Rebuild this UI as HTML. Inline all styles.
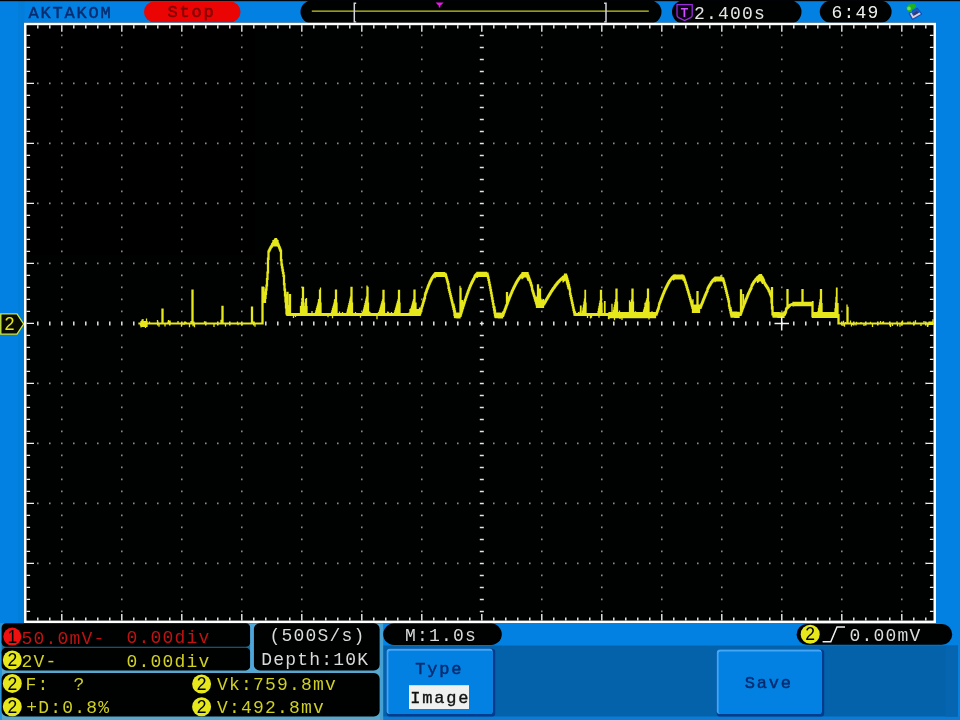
<!DOCTYPE html>
<html><head><meta charset="utf-8"><title>AKTAKOM oscilloscope</title>
<style>html,body{margin:0;padding:0;background:#0381e2;overflow:hidden}body{width:960px;height:720px;position:relative}text{white-space:pre}</style>
</head><body>
<svg width="960" height="720" viewBox="0 0 960 720" style="position:absolute;left:0;top:0;display:block;will-change:transform;opacity:0.999">
<rect width="960" height="720" fill="#0381e2"/>
<rect x="18" y="1" width="6.5" height="623" fill="#027dda"/>
<rect width="960" height="1.2" fill="#05050a"/>
<rect x="383" y="716" width="577" height="4" fill="#0a7cd8"/>
<rect x="383" y="645.5" width="575" height="71" fill="#0562aa"/>
<rect x="945.5" y="645.5" width="12.5" height="71" fill="#0665b0"/>
<rect x="144" y="1.5" width="96.5" height="20.8" rx="10.4" fill="#ec0404"/>
<rect x="300.5" y="0.5" width="361" height="23" rx="11.5" fill="#000"/>
<path d="M311.8 11.1H648.8" stroke="#c8ce24" stroke-width="1.4"/>
<path d="M356.2 3.2h-1.9v18.8h1.9M604.1 3.2h1.9v18.8h-1.9" stroke="#d4d4dc" stroke-width="1.5" fill="none"/>
<path d="M435.6 2.6h8l-2.6 2.6h-0.6v2.2h-1.6v-2.2h-0.6z" fill="#e818e8"/>
<rect x="672" y="0.5" width="129.5" height="23" rx="11.5" fill="#000"/>
 <path d="M677 4.6h15.2v10.6q0 1.6 -1.6 2.4l-6 3l-6-3q-1.6-0.8-1.6-2.4z" fill="#0c0014" stroke="#9c2cdc" stroke-width="1.3"/>
<rect x="819.8" y="0.8" width="71.8" height="22" rx="11" fill="#000"/>
<g><path d="M909 13.2L917.3 8L921.9 14.1L912.4 19.7z" fill="#1c58c0" stroke="#1450b4" stroke-width="1"/><path d="M910 13.6L912.8 18.4L920.8 13.9L919.5 12.4L913.4 16L911.4 12.8z" fill="#e2ccd8"/><path d="M913 13.4L917 11L918.4 12.8L914.2 15.2z" fill="#343a6c"/><path d="M906.3 7.2L909 4.3L914.5 4L916.4 6L914.2 8.6L912.2 9.2L911.6 12.4L909 12L907 10z" fill="#22b416"/><circle cx="909" cy="8.4" r="1.9" fill="#6ce05c"/></g>
<path d="M0.8 313.8H17L23.6 324L17 334.2H0.8z" fill="#0a0a00" stroke="#d8e830" stroke-width="1.3"/>
<rect x="24.0" y="22.7" width="912.0" height="600.4" fill="#000"/>
<path d="M61.0 35.4h1.6M61.0 47.4h1.6M61.0 59.4h1.6M61.0 71.4h1.6M61.0 83.4h1.6M61.0 95.4h1.6M61.0 107.4h1.6M61.0 119.4h1.6M61.0 131.4h1.6M61.0 143.4h1.6M61.0 155.4h1.6M61.0 167.4h1.6M61.0 179.4h1.6M61.0 191.4h1.6M61.0 203.4h1.6M61.0 215.4h1.6M61.0 227.4h1.6M61.0 239.4h1.6M61.0 251.4h1.6M61.0 263.4h1.6M61.0 275.4h1.6M61.0 287.4h1.6M61.0 299.4h1.6M61.0 311.4h1.6M61.0 335.4h1.6M61.0 347.4h1.6M61.0 359.4h1.6M61.0 371.4h1.6M61.0 383.4h1.6M61.0 395.4h1.6M61.0 407.4h1.6M61.0 419.4h1.6M61.0 431.4h1.6M61.0 443.4h1.6M61.0 455.4h1.6M61.0 467.4h1.6M61.0 479.4h1.6M61.0 491.4h1.6M61.0 503.4h1.6M61.0 515.4h1.6M61.0 527.4h1.6M61.0 539.4h1.6M61.0 551.4h1.6M61.0 563.4h1.6M61.0 575.4h1.6M61.0 587.4h1.6M61.0 599.4h1.6M61.0 611.4h1.6M121.0 35.4h1.6M121.0 47.4h1.6M121.0 59.4h1.6M121.0 71.4h1.6M121.0 83.4h1.6M121.0 95.4h1.6M121.0 107.4h1.6M121.0 119.4h1.6M121.0 131.4h1.6M121.0 143.4h1.6M121.0 155.4h1.6M121.0 167.4h1.6M121.0 179.4h1.6M121.0 191.4h1.6M121.0 203.4h1.6M121.0 215.4h1.6M121.0 227.4h1.6M121.0 239.4h1.6M121.0 251.4h1.6M121.0 263.4h1.6M121.0 275.4h1.6M121.0 287.4h1.6M121.0 299.4h1.6M121.0 311.4h1.6M121.0 335.4h1.6M121.0 347.4h1.6M121.0 359.4h1.6M121.0 371.4h1.6M121.0 383.4h1.6M121.0 395.4h1.6M121.0 407.4h1.6M121.0 419.4h1.6M121.0 431.4h1.6M121.0 443.4h1.6M121.0 455.4h1.6M121.0 467.4h1.6M121.0 479.4h1.6M121.0 491.4h1.6M121.0 503.4h1.6M121.0 515.4h1.6M121.0 527.4h1.6M121.0 539.4h1.6M121.0 551.4h1.6M121.0 563.4h1.6M121.0 575.4h1.6M121.0 587.4h1.6M121.0 599.4h1.6M121.0 611.4h1.6M181.0 35.4h1.6M181.0 47.4h1.6M181.0 59.4h1.6M181.0 71.4h1.6M181.0 83.4h1.6M181.0 95.4h1.6M181.0 107.4h1.6M181.0 119.4h1.6M181.0 131.4h1.6M181.0 143.4h1.6M181.0 155.4h1.6M181.0 167.4h1.6M181.0 179.4h1.6M181.0 191.4h1.6M181.0 203.4h1.6M181.0 215.4h1.6M181.0 227.4h1.6M181.0 239.4h1.6M181.0 251.4h1.6M181.0 263.4h1.6M181.0 275.4h1.6M181.0 287.4h1.6M181.0 299.4h1.6M181.0 311.4h1.6M181.0 335.4h1.6M181.0 347.4h1.6M181.0 359.4h1.6M181.0 371.4h1.6M181.0 383.4h1.6M181.0 395.4h1.6M181.0 407.4h1.6M181.0 419.4h1.6M181.0 431.4h1.6M181.0 443.4h1.6M181.0 455.4h1.6M181.0 467.4h1.6M181.0 479.4h1.6M181.0 491.4h1.6M181.0 503.4h1.6M181.0 515.4h1.6M181.0 527.4h1.6M181.0 539.4h1.6M181.0 551.4h1.6M181.0 563.4h1.6M181.0 575.4h1.6M181.0 587.4h1.6M181.0 599.4h1.6M181.0 611.4h1.6M241.0 35.4h1.6M241.0 47.4h1.6M241.0 59.4h1.6M241.0 71.4h1.6M241.0 83.4h1.6M241.0 95.4h1.6M241.0 107.4h1.6M241.0 119.4h1.6M241.0 131.4h1.6M241.0 143.4h1.6M241.0 155.4h1.6M241.0 167.4h1.6M241.0 179.4h1.6M241.0 191.4h1.6M241.0 203.4h1.6M241.0 215.4h1.6M241.0 227.4h1.6M241.0 239.4h1.6M241.0 251.4h1.6M241.0 263.4h1.6M241.0 275.4h1.6M241.0 287.4h1.6M241.0 299.4h1.6M241.0 311.4h1.6M241.0 335.4h1.6M241.0 347.4h1.6M241.0 359.4h1.6M241.0 371.4h1.6M241.0 383.4h1.6M241.0 395.4h1.6M241.0 407.4h1.6M241.0 419.4h1.6M241.0 431.4h1.6M241.0 443.4h1.6M241.0 455.4h1.6M241.0 467.4h1.6M241.0 479.4h1.6M241.0 491.4h1.6M241.0 503.4h1.6M241.0 515.4h1.6M241.0 527.4h1.6M241.0 539.4h1.6M241.0 551.4h1.6M241.0 563.4h1.6M241.0 575.4h1.6M241.0 587.4h1.6M241.0 599.4h1.6M241.0 611.4h1.6M301.0 35.4h1.6M301.0 47.4h1.6M301.0 59.4h1.6M301.0 71.4h1.6M301.0 83.4h1.6M301.0 95.4h1.6M301.0 107.4h1.6M301.0 119.4h1.6M301.0 131.4h1.6M301.0 143.4h1.6M301.0 155.4h1.6M301.0 167.4h1.6M301.0 179.4h1.6M301.0 191.4h1.6M301.0 203.4h1.6M301.0 215.4h1.6M301.0 227.4h1.6M301.0 239.4h1.6M301.0 251.4h1.6M301.0 263.4h1.6M301.0 275.4h1.6M301.0 287.4h1.6M301.0 299.4h1.6M301.0 311.4h1.6M301.0 335.4h1.6M301.0 347.4h1.6M301.0 359.4h1.6M301.0 371.4h1.6M301.0 383.4h1.6M301.0 395.4h1.6M301.0 407.4h1.6M301.0 419.4h1.6M301.0 431.4h1.6M301.0 443.4h1.6M301.0 455.4h1.6M301.0 467.4h1.6M301.0 479.4h1.6M301.0 491.4h1.6M301.0 503.4h1.6M301.0 515.4h1.6M301.0 527.4h1.6M301.0 539.4h1.6M301.0 551.4h1.6M301.0 563.4h1.6M301.0 575.4h1.6M301.0 587.4h1.6M301.0 599.4h1.6M301.0 611.4h1.6M361.0 35.4h1.6M361.0 47.4h1.6M361.0 59.4h1.6M361.0 71.4h1.6M361.0 83.4h1.6M361.0 95.4h1.6M361.0 107.4h1.6M361.0 119.4h1.6M361.0 131.4h1.6M361.0 143.4h1.6M361.0 155.4h1.6M361.0 167.4h1.6M361.0 179.4h1.6M361.0 191.4h1.6M361.0 203.4h1.6M361.0 215.4h1.6M361.0 227.4h1.6M361.0 239.4h1.6M361.0 251.4h1.6M361.0 263.4h1.6M361.0 275.4h1.6M361.0 287.4h1.6M361.0 299.4h1.6M361.0 311.4h1.6M361.0 335.4h1.6M361.0 347.4h1.6M361.0 359.4h1.6M361.0 371.4h1.6M361.0 383.4h1.6M361.0 395.4h1.6M361.0 407.4h1.6M361.0 419.4h1.6M361.0 431.4h1.6M361.0 443.4h1.6M361.0 455.4h1.6M361.0 467.4h1.6M361.0 479.4h1.6M361.0 491.4h1.6M361.0 503.4h1.6M361.0 515.4h1.6M361.0 527.4h1.6M361.0 539.4h1.6M361.0 551.4h1.6M361.0 563.4h1.6M361.0 575.4h1.6M361.0 587.4h1.6M361.0 599.4h1.6M361.0 611.4h1.6M421.0 35.4h1.6M421.0 47.4h1.6M421.0 59.4h1.6M421.0 71.4h1.6M421.0 83.4h1.6M421.0 95.4h1.6M421.0 107.4h1.6M421.0 119.4h1.6M421.0 131.4h1.6M421.0 143.4h1.6M421.0 155.4h1.6M421.0 167.4h1.6M421.0 179.4h1.6M421.0 191.4h1.6M421.0 203.4h1.6M421.0 215.4h1.6M421.0 227.4h1.6M421.0 239.4h1.6M421.0 251.4h1.6M421.0 263.4h1.6M421.0 275.4h1.6M421.0 287.4h1.6M421.0 299.4h1.6M421.0 311.4h1.6M421.0 335.4h1.6M421.0 347.4h1.6M421.0 359.4h1.6M421.0 371.4h1.6M421.0 383.4h1.6M421.0 395.4h1.6M421.0 407.4h1.6M421.0 419.4h1.6M421.0 431.4h1.6M421.0 443.4h1.6M421.0 455.4h1.6M421.0 467.4h1.6M421.0 479.4h1.6M421.0 491.4h1.6M421.0 503.4h1.6M421.0 515.4h1.6M421.0 527.4h1.6M421.0 539.4h1.6M421.0 551.4h1.6M421.0 563.4h1.6M421.0 575.4h1.6M421.0 587.4h1.6M421.0 599.4h1.6M421.0 611.4h1.6M541.0 35.4h1.6M541.0 47.4h1.6M541.0 59.4h1.6M541.0 71.4h1.6M541.0 83.4h1.6M541.0 95.4h1.6M541.0 107.4h1.6M541.0 119.4h1.6M541.0 131.4h1.6M541.0 143.4h1.6M541.0 155.4h1.6M541.0 167.4h1.6M541.0 179.4h1.6M541.0 191.4h1.6M541.0 203.4h1.6M541.0 215.4h1.6M541.0 227.4h1.6M541.0 239.4h1.6M541.0 251.4h1.6M541.0 263.4h1.6M541.0 275.4h1.6M541.0 287.4h1.6M541.0 299.4h1.6M541.0 311.4h1.6M541.0 335.4h1.6M541.0 347.4h1.6M541.0 359.4h1.6M541.0 371.4h1.6M541.0 383.4h1.6M541.0 395.4h1.6M541.0 407.4h1.6M541.0 419.4h1.6M541.0 431.4h1.6M541.0 443.4h1.6M541.0 455.4h1.6M541.0 467.4h1.6M541.0 479.4h1.6M541.0 491.4h1.6M541.0 503.4h1.6M541.0 515.4h1.6M541.0 527.4h1.6M541.0 539.4h1.6M541.0 551.4h1.6M541.0 563.4h1.6M541.0 575.4h1.6M541.0 587.4h1.6M541.0 599.4h1.6M541.0 611.4h1.6M601.0 35.4h1.6M601.0 47.4h1.6M601.0 59.4h1.6M601.0 71.4h1.6M601.0 83.4h1.6M601.0 95.4h1.6M601.0 107.4h1.6M601.0 119.4h1.6M601.0 131.4h1.6M601.0 143.4h1.6M601.0 155.4h1.6M601.0 167.4h1.6M601.0 179.4h1.6M601.0 191.4h1.6M601.0 203.4h1.6M601.0 215.4h1.6M601.0 227.4h1.6M601.0 239.4h1.6M601.0 251.4h1.6M601.0 263.4h1.6M601.0 275.4h1.6M601.0 287.4h1.6M601.0 299.4h1.6M601.0 311.4h1.6M601.0 335.4h1.6M601.0 347.4h1.6M601.0 359.4h1.6M601.0 371.4h1.6M601.0 383.4h1.6M601.0 395.4h1.6M601.0 407.4h1.6M601.0 419.4h1.6M601.0 431.4h1.6M601.0 443.4h1.6M601.0 455.4h1.6M601.0 467.4h1.6M601.0 479.4h1.6M601.0 491.4h1.6M601.0 503.4h1.6M601.0 515.4h1.6M601.0 527.4h1.6M601.0 539.4h1.6M601.0 551.4h1.6M601.0 563.4h1.6M601.0 575.4h1.6M601.0 587.4h1.6M601.0 599.4h1.6M601.0 611.4h1.6M661.0 35.4h1.6M661.0 47.4h1.6M661.0 59.4h1.6M661.0 71.4h1.6M661.0 83.4h1.6M661.0 95.4h1.6M661.0 107.4h1.6M661.0 119.4h1.6M661.0 131.4h1.6M661.0 143.4h1.6M661.0 155.4h1.6M661.0 167.4h1.6M661.0 179.4h1.6M661.0 191.4h1.6M661.0 203.4h1.6M661.0 215.4h1.6M661.0 227.4h1.6M661.0 239.4h1.6M661.0 251.4h1.6M661.0 263.4h1.6M661.0 275.4h1.6M661.0 287.4h1.6M661.0 299.4h1.6M661.0 311.4h1.6M661.0 335.4h1.6M661.0 347.4h1.6M661.0 359.4h1.6M661.0 371.4h1.6M661.0 383.4h1.6M661.0 395.4h1.6M661.0 407.4h1.6M661.0 419.4h1.6M661.0 431.4h1.6M661.0 443.4h1.6M661.0 455.4h1.6M661.0 467.4h1.6M661.0 479.4h1.6M661.0 491.4h1.6M661.0 503.4h1.6M661.0 515.4h1.6M661.0 527.4h1.6M661.0 539.4h1.6M661.0 551.4h1.6M661.0 563.4h1.6M661.0 575.4h1.6M661.0 587.4h1.6M661.0 599.4h1.6M661.0 611.4h1.6M721.0 35.4h1.6M721.0 47.4h1.6M721.0 59.4h1.6M721.0 71.4h1.6M721.0 83.4h1.6M721.0 95.4h1.6M721.0 107.4h1.6M721.0 119.4h1.6M721.0 131.4h1.6M721.0 143.4h1.6M721.0 155.4h1.6M721.0 167.4h1.6M721.0 179.4h1.6M721.0 191.4h1.6M721.0 203.4h1.6M721.0 215.4h1.6M721.0 227.4h1.6M721.0 239.4h1.6M721.0 251.4h1.6M721.0 263.4h1.6M721.0 275.4h1.6M721.0 287.4h1.6M721.0 299.4h1.6M721.0 311.4h1.6M721.0 335.4h1.6M721.0 347.4h1.6M721.0 359.4h1.6M721.0 371.4h1.6M721.0 383.4h1.6M721.0 395.4h1.6M721.0 407.4h1.6M721.0 419.4h1.6M721.0 431.4h1.6M721.0 443.4h1.6M721.0 455.4h1.6M721.0 467.4h1.6M721.0 479.4h1.6M721.0 491.4h1.6M721.0 503.4h1.6M721.0 515.4h1.6M721.0 527.4h1.6M721.0 539.4h1.6M721.0 551.4h1.6M721.0 563.4h1.6M721.0 575.4h1.6M721.0 587.4h1.6M721.0 599.4h1.6M721.0 611.4h1.6M781.0 35.4h1.6M781.0 47.4h1.6M781.0 59.4h1.6M781.0 71.4h1.6M781.0 83.4h1.6M781.0 95.4h1.6M781.0 107.4h1.6M781.0 119.4h1.6M781.0 131.4h1.6M781.0 143.4h1.6M781.0 155.4h1.6M781.0 167.4h1.6M781.0 179.4h1.6M781.0 191.4h1.6M781.0 203.4h1.6M781.0 215.4h1.6M781.0 227.4h1.6M781.0 239.4h1.6M781.0 251.4h1.6M781.0 263.4h1.6M781.0 275.4h1.6M781.0 287.4h1.6M781.0 299.4h1.6M781.0 311.4h1.6M781.0 335.4h1.6M781.0 347.4h1.6M781.0 359.4h1.6M781.0 371.4h1.6M781.0 383.4h1.6M781.0 395.4h1.6M781.0 407.4h1.6M781.0 419.4h1.6M781.0 431.4h1.6M781.0 443.4h1.6M781.0 455.4h1.6M781.0 467.4h1.6M781.0 479.4h1.6M781.0 491.4h1.6M781.0 503.4h1.6M781.0 515.4h1.6M781.0 527.4h1.6M781.0 539.4h1.6M781.0 551.4h1.6M781.0 563.4h1.6M781.0 575.4h1.6M781.0 587.4h1.6M781.0 599.4h1.6M781.0 611.4h1.6M841.0 35.4h1.6M841.0 47.4h1.6M841.0 59.4h1.6M841.0 71.4h1.6M841.0 83.4h1.6M841.0 95.4h1.6M841.0 107.4h1.6M841.0 119.4h1.6M841.0 131.4h1.6M841.0 143.4h1.6M841.0 155.4h1.6M841.0 167.4h1.6M841.0 179.4h1.6M841.0 191.4h1.6M841.0 203.4h1.6M841.0 215.4h1.6M841.0 227.4h1.6M841.0 239.4h1.6M841.0 251.4h1.6M841.0 263.4h1.6M841.0 275.4h1.6M841.0 287.4h1.6M841.0 299.4h1.6M841.0 311.4h1.6M841.0 335.4h1.6M841.0 347.4h1.6M841.0 359.4h1.6M841.0 371.4h1.6M841.0 383.4h1.6M841.0 395.4h1.6M841.0 407.4h1.6M841.0 419.4h1.6M841.0 431.4h1.6M841.0 443.4h1.6M841.0 455.4h1.6M841.0 467.4h1.6M841.0 479.4h1.6M841.0 491.4h1.6M841.0 503.4h1.6M841.0 515.4h1.6M841.0 527.4h1.6M841.0 539.4h1.6M841.0 551.4h1.6M841.0 563.4h1.6M841.0 575.4h1.6M841.0 587.4h1.6M841.0 599.4h1.6M841.0 611.4h1.6M901.0 35.4h1.6M901.0 47.4h1.6M901.0 59.4h1.6M901.0 71.4h1.6M901.0 83.4h1.6M901.0 95.4h1.6M901.0 107.4h1.6M901.0 119.4h1.6M901.0 131.4h1.6M901.0 143.4h1.6M901.0 155.4h1.6M901.0 167.4h1.6M901.0 179.4h1.6M901.0 191.4h1.6M901.0 203.4h1.6M901.0 215.4h1.6M901.0 227.4h1.6M901.0 239.4h1.6M901.0 251.4h1.6M901.0 263.4h1.6M901.0 275.4h1.6M901.0 287.4h1.6M901.0 299.4h1.6M901.0 311.4h1.6M901.0 335.4h1.6M901.0 347.4h1.6M901.0 359.4h1.6M901.0 371.4h1.6M901.0 383.4h1.6M901.0 395.4h1.6M901.0 407.4h1.6M901.0 419.4h1.6M901.0 431.4h1.6M901.0 443.4h1.6M901.0 455.4h1.6M901.0 467.4h1.6M901.0 479.4h1.6M901.0 491.4h1.6M901.0 503.4h1.6M901.0 515.4h1.6M901.0 527.4h1.6M901.0 539.4h1.6M901.0 551.4h1.6M901.0 563.4h1.6M901.0 575.4h1.6M901.0 587.4h1.6M901.0 599.4h1.6M901.0 611.4h1.6M37.0 83.4h1.6M49.0 83.4h1.6M73.0 83.4h1.6M85.0 83.4h1.6M97.0 83.4h1.6M109.0 83.4h1.6M133.0 83.4h1.6M145.0 83.4h1.6M157.0 83.4h1.6M169.0 83.4h1.6M193.0 83.4h1.6M205.0 83.4h1.6M217.0 83.4h1.6M229.0 83.4h1.6M253.0 83.4h1.6M265.0 83.4h1.6M277.0 83.4h1.6M289.0 83.4h1.6M313.0 83.4h1.6M325.0 83.4h1.6M337.0 83.4h1.6M349.0 83.4h1.6M373.0 83.4h1.6M385.0 83.4h1.6M397.0 83.4h1.6M409.0 83.4h1.6M433.0 83.4h1.6M445.0 83.4h1.6M457.0 83.4h1.6M469.0 83.4h1.6M493.0 83.4h1.6M505.0 83.4h1.6M517.0 83.4h1.6M529.0 83.4h1.6M553.0 83.4h1.6M565.0 83.4h1.6M577.0 83.4h1.6M589.0 83.4h1.6M613.0 83.4h1.6M625.0 83.4h1.6M637.0 83.4h1.6M649.0 83.4h1.6M673.0 83.4h1.6M685.0 83.4h1.6M697.0 83.4h1.6M709.0 83.4h1.6M733.0 83.4h1.6M745.0 83.4h1.6M757.0 83.4h1.6M769.0 83.4h1.6M793.0 83.4h1.6M805.0 83.4h1.6M817.0 83.4h1.6M829.0 83.4h1.6M853.0 83.4h1.6M865.0 83.4h1.6M877.0 83.4h1.6M889.0 83.4h1.6M913.0 83.4h1.6M925.0 83.4h1.6M37.0 143.4h1.6M49.0 143.4h1.6M73.0 143.4h1.6M85.0 143.4h1.6M97.0 143.4h1.6M109.0 143.4h1.6M133.0 143.4h1.6M145.0 143.4h1.6M157.0 143.4h1.6M169.0 143.4h1.6M193.0 143.4h1.6M205.0 143.4h1.6M217.0 143.4h1.6M229.0 143.4h1.6M253.0 143.4h1.6M265.0 143.4h1.6M277.0 143.4h1.6M289.0 143.4h1.6M313.0 143.4h1.6M325.0 143.4h1.6M337.0 143.4h1.6M349.0 143.4h1.6M373.0 143.4h1.6M385.0 143.4h1.6M397.0 143.4h1.6M409.0 143.4h1.6M433.0 143.4h1.6M445.0 143.4h1.6M457.0 143.4h1.6M469.0 143.4h1.6M493.0 143.4h1.6M505.0 143.4h1.6M517.0 143.4h1.6M529.0 143.4h1.6M553.0 143.4h1.6M565.0 143.4h1.6M577.0 143.4h1.6M589.0 143.4h1.6M613.0 143.4h1.6M625.0 143.4h1.6M637.0 143.4h1.6M649.0 143.4h1.6M673.0 143.4h1.6M685.0 143.4h1.6M697.0 143.4h1.6M709.0 143.4h1.6M733.0 143.4h1.6M745.0 143.4h1.6M757.0 143.4h1.6M769.0 143.4h1.6M793.0 143.4h1.6M805.0 143.4h1.6M817.0 143.4h1.6M829.0 143.4h1.6M853.0 143.4h1.6M865.0 143.4h1.6M877.0 143.4h1.6M889.0 143.4h1.6M913.0 143.4h1.6M925.0 143.4h1.6M37.0 203.4h1.6M49.0 203.4h1.6M73.0 203.4h1.6M85.0 203.4h1.6M97.0 203.4h1.6M109.0 203.4h1.6M133.0 203.4h1.6M145.0 203.4h1.6M157.0 203.4h1.6M169.0 203.4h1.6M193.0 203.4h1.6M205.0 203.4h1.6M217.0 203.4h1.6M229.0 203.4h1.6M253.0 203.4h1.6M265.0 203.4h1.6M277.0 203.4h1.6M289.0 203.4h1.6M313.0 203.4h1.6M325.0 203.4h1.6M337.0 203.4h1.6M349.0 203.4h1.6M373.0 203.4h1.6M385.0 203.4h1.6M397.0 203.4h1.6M409.0 203.4h1.6M433.0 203.4h1.6M445.0 203.4h1.6M457.0 203.4h1.6M469.0 203.4h1.6M493.0 203.4h1.6M505.0 203.4h1.6M517.0 203.4h1.6M529.0 203.4h1.6M553.0 203.4h1.6M565.0 203.4h1.6M577.0 203.4h1.6M589.0 203.4h1.6M613.0 203.4h1.6M625.0 203.4h1.6M637.0 203.4h1.6M649.0 203.4h1.6M673.0 203.4h1.6M685.0 203.4h1.6M697.0 203.4h1.6M709.0 203.4h1.6M733.0 203.4h1.6M745.0 203.4h1.6M757.0 203.4h1.6M769.0 203.4h1.6M793.0 203.4h1.6M805.0 203.4h1.6M817.0 203.4h1.6M829.0 203.4h1.6M853.0 203.4h1.6M865.0 203.4h1.6M877.0 203.4h1.6M889.0 203.4h1.6M913.0 203.4h1.6M925.0 203.4h1.6M37.0 263.4h1.6M49.0 263.4h1.6M73.0 263.4h1.6M85.0 263.4h1.6M97.0 263.4h1.6M109.0 263.4h1.6M133.0 263.4h1.6M145.0 263.4h1.6M157.0 263.4h1.6M169.0 263.4h1.6M193.0 263.4h1.6M205.0 263.4h1.6M217.0 263.4h1.6M229.0 263.4h1.6M253.0 263.4h1.6M265.0 263.4h1.6M277.0 263.4h1.6M289.0 263.4h1.6M313.0 263.4h1.6M325.0 263.4h1.6M337.0 263.4h1.6M349.0 263.4h1.6M373.0 263.4h1.6M385.0 263.4h1.6M397.0 263.4h1.6M409.0 263.4h1.6M433.0 263.4h1.6M445.0 263.4h1.6M457.0 263.4h1.6M469.0 263.4h1.6M493.0 263.4h1.6M505.0 263.4h1.6M517.0 263.4h1.6M529.0 263.4h1.6M553.0 263.4h1.6M565.0 263.4h1.6M577.0 263.4h1.6M589.0 263.4h1.6M613.0 263.4h1.6M625.0 263.4h1.6M637.0 263.4h1.6M649.0 263.4h1.6M673.0 263.4h1.6M685.0 263.4h1.6M697.0 263.4h1.6M709.0 263.4h1.6M733.0 263.4h1.6M745.0 263.4h1.6M757.0 263.4h1.6M769.0 263.4h1.6M793.0 263.4h1.6M805.0 263.4h1.6M817.0 263.4h1.6M829.0 263.4h1.6M853.0 263.4h1.6M865.0 263.4h1.6M877.0 263.4h1.6M889.0 263.4h1.6M913.0 263.4h1.6M925.0 263.4h1.6M37.0 383.4h1.6M49.0 383.4h1.6M73.0 383.4h1.6M85.0 383.4h1.6M97.0 383.4h1.6M109.0 383.4h1.6M133.0 383.4h1.6M145.0 383.4h1.6M157.0 383.4h1.6M169.0 383.4h1.6M193.0 383.4h1.6M205.0 383.4h1.6M217.0 383.4h1.6M229.0 383.4h1.6M253.0 383.4h1.6M265.0 383.4h1.6M277.0 383.4h1.6M289.0 383.4h1.6M313.0 383.4h1.6M325.0 383.4h1.6M337.0 383.4h1.6M349.0 383.4h1.6M373.0 383.4h1.6M385.0 383.4h1.6M397.0 383.4h1.6M409.0 383.4h1.6M433.0 383.4h1.6M445.0 383.4h1.6M457.0 383.4h1.6M469.0 383.4h1.6M493.0 383.4h1.6M505.0 383.4h1.6M517.0 383.4h1.6M529.0 383.4h1.6M553.0 383.4h1.6M565.0 383.4h1.6M577.0 383.4h1.6M589.0 383.4h1.6M613.0 383.4h1.6M625.0 383.4h1.6M637.0 383.4h1.6M649.0 383.4h1.6M673.0 383.4h1.6M685.0 383.4h1.6M697.0 383.4h1.6M709.0 383.4h1.6M733.0 383.4h1.6M745.0 383.4h1.6M757.0 383.4h1.6M769.0 383.4h1.6M793.0 383.4h1.6M805.0 383.4h1.6M817.0 383.4h1.6M829.0 383.4h1.6M853.0 383.4h1.6M865.0 383.4h1.6M877.0 383.4h1.6M889.0 383.4h1.6M913.0 383.4h1.6M925.0 383.4h1.6M37.0 443.4h1.6M49.0 443.4h1.6M73.0 443.4h1.6M85.0 443.4h1.6M97.0 443.4h1.6M109.0 443.4h1.6M133.0 443.4h1.6M145.0 443.4h1.6M157.0 443.4h1.6M169.0 443.4h1.6M193.0 443.4h1.6M205.0 443.4h1.6M217.0 443.4h1.6M229.0 443.4h1.6M253.0 443.4h1.6M265.0 443.4h1.6M277.0 443.4h1.6M289.0 443.4h1.6M313.0 443.4h1.6M325.0 443.4h1.6M337.0 443.4h1.6M349.0 443.4h1.6M373.0 443.4h1.6M385.0 443.4h1.6M397.0 443.4h1.6M409.0 443.4h1.6M433.0 443.4h1.6M445.0 443.4h1.6M457.0 443.4h1.6M469.0 443.4h1.6M493.0 443.4h1.6M505.0 443.4h1.6M517.0 443.4h1.6M529.0 443.4h1.6M553.0 443.4h1.6M565.0 443.4h1.6M577.0 443.4h1.6M589.0 443.4h1.6M613.0 443.4h1.6M625.0 443.4h1.6M637.0 443.4h1.6M649.0 443.4h1.6M673.0 443.4h1.6M685.0 443.4h1.6M697.0 443.4h1.6M709.0 443.4h1.6M733.0 443.4h1.6M745.0 443.4h1.6M757.0 443.4h1.6M769.0 443.4h1.6M793.0 443.4h1.6M805.0 443.4h1.6M817.0 443.4h1.6M829.0 443.4h1.6M853.0 443.4h1.6M865.0 443.4h1.6M877.0 443.4h1.6M889.0 443.4h1.6M913.0 443.4h1.6M925.0 443.4h1.6M37.0 503.4h1.6M49.0 503.4h1.6M73.0 503.4h1.6M85.0 503.4h1.6M97.0 503.4h1.6M109.0 503.4h1.6M133.0 503.4h1.6M145.0 503.4h1.6M157.0 503.4h1.6M169.0 503.4h1.6M193.0 503.4h1.6M205.0 503.4h1.6M217.0 503.4h1.6M229.0 503.4h1.6M253.0 503.4h1.6M265.0 503.4h1.6M277.0 503.4h1.6M289.0 503.4h1.6M313.0 503.4h1.6M325.0 503.4h1.6M337.0 503.4h1.6M349.0 503.4h1.6M373.0 503.4h1.6M385.0 503.4h1.6M397.0 503.4h1.6M409.0 503.4h1.6M433.0 503.4h1.6M445.0 503.4h1.6M457.0 503.4h1.6M469.0 503.4h1.6M493.0 503.4h1.6M505.0 503.4h1.6M517.0 503.4h1.6M529.0 503.4h1.6M553.0 503.4h1.6M565.0 503.4h1.6M577.0 503.4h1.6M589.0 503.4h1.6M613.0 503.4h1.6M625.0 503.4h1.6M637.0 503.4h1.6M649.0 503.4h1.6M673.0 503.4h1.6M685.0 503.4h1.6M697.0 503.4h1.6M709.0 503.4h1.6M733.0 503.4h1.6M745.0 503.4h1.6M757.0 503.4h1.6M769.0 503.4h1.6M793.0 503.4h1.6M805.0 503.4h1.6M817.0 503.4h1.6M829.0 503.4h1.6M853.0 503.4h1.6M865.0 503.4h1.6M877.0 503.4h1.6M889.0 503.4h1.6M913.0 503.4h1.6M925.0 503.4h1.6M37.0 563.4h1.6M49.0 563.4h1.6M73.0 563.4h1.6M85.0 563.4h1.6M97.0 563.4h1.6M109.0 563.4h1.6M133.0 563.4h1.6M145.0 563.4h1.6M157.0 563.4h1.6M169.0 563.4h1.6M193.0 563.4h1.6M205.0 563.4h1.6M217.0 563.4h1.6M229.0 563.4h1.6M253.0 563.4h1.6M265.0 563.4h1.6M277.0 563.4h1.6M289.0 563.4h1.6M313.0 563.4h1.6M325.0 563.4h1.6M337.0 563.4h1.6M349.0 563.4h1.6M373.0 563.4h1.6M385.0 563.4h1.6M397.0 563.4h1.6M409.0 563.4h1.6M433.0 563.4h1.6M445.0 563.4h1.6M457.0 563.4h1.6M469.0 563.4h1.6M493.0 563.4h1.6M505.0 563.4h1.6M517.0 563.4h1.6M529.0 563.4h1.6M553.0 563.4h1.6M565.0 563.4h1.6M577.0 563.4h1.6M589.0 563.4h1.6M613.0 563.4h1.6M625.0 563.4h1.6M637.0 563.4h1.6M649.0 563.4h1.6M673.0 563.4h1.6M685.0 563.4h1.6M697.0 563.4h1.6M709.0 563.4h1.6M733.0 563.4h1.6M745.0 563.4h1.6M757.0 563.4h1.6M769.0 563.4h1.6M793.0 563.4h1.6M805.0 563.4h1.6M817.0 563.4h1.6M829.0 563.4h1.6M853.0 563.4h1.6M865.0 563.4h1.6M877.0 563.4h1.6M889.0 563.4h1.6M913.0 563.4h1.6M925.0 563.4h1.6" stroke="#8a8a8a" stroke-width="1.6" fill="none"/>
<path d="M479.8 35.4h4M479.8 47.4h4M479.8 59.4h4M479.8 71.4h4M479.8 83.4h4M479.8 95.4h4M479.8 107.4h4M479.8 119.4h4M479.8 131.4h4M479.8 143.4h4M479.8 155.4h4M479.8 167.4h4M479.8 179.4h4M479.8 191.4h4M479.8 203.4h4M479.8 215.4h4M479.8 227.4h4M479.8 239.4h4M479.8 251.4h4M479.8 263.4h4M479.8 275.4h4M479.8 287.4h4M479.8 299.4h4M479.8 311.4h4M479.8 323.4h4M479.8 335.4h4M479.8 347.4h4M479.8 359.4h4M479.8 371.4h4M479.8 383.4h4M479.8 395.4h4M479.8 407.4h4M479.8 419.4h4M479.8 431.4h4M479.8 443.4h4M479.8 455.4h4M479.8 467.4h4M479.8 479.4h4M479.8 491.4h4M479.8 503.4h4M479.8 515.4h4M479.8 527.4h4M479.8 539.4h4M479.8 551.4h4M479.8 563.4h4M479.8 575.4h4M479.8 587.4h4M479.8 599.4h4M479.8 611.4h4M37.8 321.4v4M49.8 321.4v4M61.8 321.4v4M73.8 321.4v4M85.8 321.4v4M97.8 321.4v4M109.8 321.4v4M121.8 321.4v4M133.8 321.4v4M145.8 321.4v4M157.8 321.4v4M169.8 321.4v4M181.8 321.4v4M193.8 321.4v4M205.8 321.4v4M217.8 321.4v4M229.8 321.4v4M241.8 321.4v4M253.8 321.4v4M265.8 321.4v4M277.8 321.4v4M289.8 321.4v4M301.8 321.4v4M313.8 321.4v4M325.8 321.4v4M337.8 321.4v4M349.8 321.4v4M361.8 321.4v4M373.8 321.4v4M385.8 321.4v4M397.8 321.4v4M409.8 321.4v4M421.8 321.4v4M433.8 321.4v4M445.8 321.4v4M457.8 321.4v4M469.8 321.4v4M481.8 321.4v4M493.8 321.4v4M505.8 321.4v4M517.8 321.4v4M529.8 321.4v4M541.8 321.4v4M553.8 321.4v4M565.8 321.4v4M577.8 321.4v4M589.8 321.4v4M601.8 321.4v4M613.8 321.4v4M625.8 321.4v4M637.8 321.4v4M649.8 321.4v4M661.8 321.4v4M673.8 321.4v4M685.8 321.4v4M697.8 321.4v4M709.8 321.4v4M721.8 321.4v4M733.8 321.4v4M745.8 321.4v4M757.8 321.4v4M769.8 321.4v4M781.8 321.4v4M793.8 321.4v4M805.8 321.4v4M817.8 321.4v4M829.8 321.4v4M841.8 321.4v4M853.8 321.4v4M865.8 321.4v4M877.8 321.4v4M889.8 321.4v4M901.8 321.4v4M913.8 321.4v4M925.8 321.4v4" stroke="#e4e4e4" stroke-width="1.5" fill="none"/>
<path d="M37.8 25.2v3.2M37.8 620.6v-3.2M49.8 25.2v3.2M49.8 620.6v-3.2M61.8 25.2v6.5M61.8 620.6v-6.5M73.8 25.2v3.2M73.8 620.6v-3.2M85.8 25.2v3.2M85.8 620.6v-3.2M97.8 25.2v3.2M97.8 620.6v-3.2M109.8 25.2v3.2M109.8 620.6v-3.2M121.8 25.2v6.5M121.8 620.6v-6.5M133.8 25.2v3.2M133.8 620.6v-3.2M145.8 25.2v3.2M145.8 620.6v-3.2M157.8 25.2v3.2M157.8 620.6v-3.2M169.8 25.2v3.2M169.8 620.6v-3.2M181.8 25.2v6.5M181.8 620.6v-6.5M193.8 25.2v3.2M193.8 620.6v-3.2M205.8 25.2v3.2M205.8 620.6v-3.2M217.8 25.2v3.2M217.8 620.6v-3.2M229.8 25.2v3.2M229.8 620.6v-3.2M241.8 25.2v6.5M241.8 620.6v-6.5M253.8 25.2v3.2M253.8 620.6v-3.2M265.8 25.2v3.2M265.8 620.6v-3.2M277.8 25.2v3.2M277.8 620.6v-3.2M289.8 25.2v3.2M289.8 620.6v-3.2M301.8 25.2v6.5M301.8 620.6v-6.5M313.8 25.2v3.2M313.8 620.6v-3.2M325.8 25.2v3.2M325.8 620.6v-3.2M337.8 25.2v3.2M337.8 620.6v-3.2M349.8 25.2v3.2M349.8 620.6v-3.2M361.8 25.2v6.5M361.8 620.6v-6.5M373.8 25.2v3.2M373.8 620.6v-3.2M385.8 25.2v3.2M385.8 620.6v-3.2M397.8 25.2v3.2M397.8 620.6v-3.2M409.8 25.2v3.2M409.8 620.6v-3.2M421.8 25.2v6.5M421.8 620.6v-6.5M433.8 25.2v3.2M433.8 620.6v-3.2M445.8 25.2v3.2M445.8 620.6v-3.2M457.8 25.2v3.2M457.8 620.6v-3.2M469.8 25.2v3.2M469.8 620.6v-3.2M481.8 25.2v6.5M481.8 620.6v-6.5M493.8 25.2v3.2M493.8 620.6v-3.2M505.8 25.2v3.2M505.8 620.6v-3.2M517.8 25.2v3.2M517.8 620.6v-3.2M529.8 25.2v3.2M529.8 620.6v-3.2M541.8 25.2v6.5M541.8 620.6v-6.5M553.8 25.2v3.2M553.8 620.6v-3.2M565.8 25.2v3.2M565.8 620.6v-3.2M577.8 25.2v3.2M577.8 620.6v-3.2M589.8 25.2v3.2M589.8 620.6v-3.2M601.8 25.2v6.5M601.8 620.6v-6.5M613.8 25.2v3.2M613.8 620.6v-3.2M625.8 25.2v3.2M625.8 620.6v-3.2M637.8 25.2v3.2M637.8 620.6v-3.2M649.8 25.2v3.2M649.8 620.6v-3.2M661.8 25.2v6.5M661.8 620.6v-6.5M673.8 25.2v3.2M673.8 620.6v-3.2M685.8 25.2v3.2M685.8 620.6v-3.2M697.8 25.2v3.2M697.8 620.6v-3.2M709.8 25.2v3.2M709.8 620.6v-3.2M721.8 25.2v6.5M721.8 620.6v-6.5M733.8 25.2v3.2M733.8 620.6v-3.2M745.8 25.2v3.2M745.8 620.6v-3.2M757.8 25.2v3.2M757.8 620.6v-3.2M769.8 25.2v3.2M769.8 620.6v-3.2M781.8 25.2v6.5M781.8 620.6v-6.5M793.8 25.2v3.2M793.8 620.6v-3.2M805.8 25.2v3.2M805.8 620.6v-3.2M817.8 25.2v3.2M817.8 620.6v-3.2M829.8 25.2v3.2M829.8 620.6v-3.2M841.8 25.2v6.5M841.8 620.6v-6.5M853.8 25.2v3.2M853.8 620.6v-3.2M865.8 25.2v3.2M865.8 620.6v-3.2M877.8 25.2v3.2M877.8 620.6v-3.2M889.8 25.2v3.2M889.8 620.6v-3.2M901.8 25.2v6.5M901.8 620.6v-6.5M913.8 25.2v3.2M913.8 620.6v-3.2M925.8 25.2v3.2M925.8 620.6v-3.2M26.5 35.4h3.6M933.5 35.4h-3.6M26.5 47.4h3.6M933.5 47.4h-3.6M26.5 59.4h3.6M933.5 59.4h-3.6M26.5 71.4h3.6M933.5 71.4h-3.6M26.5 83.4h7.5M933.5 83.4h-7.5M26.5 95.4h3.6M933.5 95.4h-3.6M26.5 107.4h3.6M933.5 107.4h-3.6M26.5 119.4h3.6M933.5 119.4h-3.6M26.5 131.4h3.6M933.5 131.4h-3.6M26.5 143.4h7.5M933.5 143.4h-7.5M26.5 155.4h3.6M933.5 155.4h-3.6M26.5 167.4h3.6M933.5 167.4h-3.6M26.5 179.4h3.6M933.5 179.4h-3.6M26.5 191.4h3.6M933.5 191.4h-3.6M26.5 203.4h7.5M933.5 203.4h-7.5M26.5 215.4h3.6M933.5 215.4h-3.6M26.5 227.4h3.6M933.5 227.4h-3.6M26.5 239.4h3.6M933.5 239.4h-3.6M26.5 251.4h3.6M933.5 251.4h-3.6M26.5 263.4h7.5M933.5 263.4h-7.5M26.5 275.4h3.6M933.5 275.4h-3.6M26.5 287.4h3.6M933.5 287.4h-3.6M26.5 299.4h3.6M933.5 299.4h-3.6M26.5 311.4h3.6M933.5 311.4h-3.6M26.5 323.4h7.5M933.5 323.4h-7.5M26.5 335.4h3.6M933.5 335.4h-3.6M26.5 347.4h3.6M933.5 347.4h-3.6M26.5 359.4h3.6M933.5 359.4h-3.6M26.5 371.4h3.6M933.5 371.4h-3.6M26.5 383.4h7.5M933.5 383.4h-7.5M26.5 395.4h3.6M933.5 395.4h-3.6M26.5 407.4h3.6M933.5 407.4h-3.6M26.5 419.4h3.6M933.5 419.4h-3.6M26.5 431.4h3.6M933.5 431.4h-3.6M26.5 443.4h7.5M933.5 443.4h-7.5M26.5 455.4h3.6M933.5 455.4h-3.6M26.5 467.4h3.6M933.5 467.4h-3.6M26.5 479.4h3.6M933.5 479.4h-3.6M26.5 491.4h3.6M933.5 491.4h-3.6M26.5 503.4h7.5M933.5 503.4h-7.5M26.5 515.4h3.6M933.5 515.4h-3.6M26.5 527.4h3.6M933.5 527.4h-3.6M26.5 539.4h3.6M933.5 539.4h-3.6M26.5 551.4h3.6M933.5 551.4h-3.6M26.5 563.4h7.5M933.5 563.4h-7.5M26.5 575.4h3.6M933.5 575.4h-3.6M26.5 587.4h3.6M933.5 587.4h-3.6M26.5 599.4h3.6M933.5 599.4h-3.6M26.5 611.4h3.6M933.5 611.4h-3.6" stroke="#f0f0f0" stroke-width="1.4" fill="none"/>
<rect x="25.25" y="23.95" width="909.5" height="597.9" fill="none" stroke="#fff" stroke-width="2.5"/>
<path d="M139.0 322.4V324.4M139.5 322.4V324.4M140.0 322.4V324.4M140.5 322.4V325.8M141.0 320.9V327.4M141.5 320.9V326.9M142.0 319.4V326.9M142.5 320.9V326.9M143.0 318.9V326.9M143.5 320.9V326.9M144.0 320.9V326.9M144.5 320.9V326.9M145.0 320.9V326.9M145.5 320.9V328.1M146.0 320.9V326.9M146.5 318.4V326.9M147.0 320.9V326.9M147.5 322.4V324.4M148.0 322.4V324.4M148.5 322.4V324.4M149.0 322.4V324.4M149.5 321.4V324.4M150.0 322.4V324.4M150.5 322.4V324.4M151.0 322.4V324.4M151.5 322.4V324.4M152.0 322.4V324.4M152.5 322.4V324.4M153.0 322.4V324.4M153.5 322.4V324.4M154.0 322.4V324.4M154.5 322.4V324.4M155.0 322.4V324.4M155.5 322.4V324.4M156.0 322.4V324.4M156.5 322.4V324.4M157.0 322.4V324.4M157.5 320.1V324.4M158.0 322.4V324.4M158.5 322.4V324.4M159.0 322.4V326.8M159.5 322.4V324.4M160.0 322.4V324.4M160.5 322.4V324.4M161.0 322.4V324.4M161.5 322.4V324.4M162.0 308.5V324.4M162.5 308.5V324.4M163.0 308.5V324.4M163.5 322.4V324.4M164.0 322.4V324.4M164.5 322.4V324.4M165.0 322.4V326.5M165.5 322.4V324.4M166.0 322.4V324.4M166.5 322.4V324.4M167.0 322.4V324.4M167.5 322.4V324.4M168.0 321.5V324.4M168.5 320.0V324.4M169.0 321.0V324.4M169.5 322.4V324.4M170.0 320.6V324.4M170.5 322.4V324.4M171.0 322.4V324.4M171.5 322.4V324.4M172.0 322.4V324.4M172.5 322.4V324.4M173.0 322.4V324.4M173.5 322.4V324.4M174.0 322.4V324.4M174.5 322.4V324.4M175.0 322.4V324.4M175.5 322.4V324.4M176.0 322.4V324.4M176.5 322.4V324.4M177.0 322.4V324.4M177.5 322.4V324.4M178.0 321.0V324.4M178.5 322.4V324.4M179.0 322.4V324.4M179.5 322.4V324.4M180.0 322.4V324.4M180.5 322.4V324.4M181.0 322.4V324.4M181.5 322.4V326.8M182.0 322.4V324.4M182.5 322.4V324.4M183.0 322.4V324.4M183.5 322.4V324.4M184.0 322.4V325.0M184.5 321.5V324.4M185.0 322.4V324.4M185.5 321.6V324.4M186.0 321.9V324.4M186.5 322.4V324.4M187.0 322.4V324.4M187.5 322.4V324.4M188.0 322.4V324.4M188.5 322.4V324.4M189.0 322.4V324.4M189.5 322.4V327.3M190.0 322.4V324.4M190.5 322.4V324.4M191.0 321.1V324.4M191.5 322.4V324.4M192.0 289.4V324.4M192.5 289.4V324.4M193.0 289.4V326.2M193.5 322.4V324.4M194.0 322.4V324.4M194.5 322.4V327.3M195.0 322.4V324.4M195.5 322.4V324.4M196.0 322.4V324.4M196.5 322.4V324.4M197.0 322.4V324.4M197.5 322.4V324.4M198.0 322.4V324.4M198.5 322.4V324.4M199.0 322.4V324.4M199.5 322.4V324.4M200.0 322.4V324.4M200.5 322.4V324.4M201.0 322.4V324.4M201.5 322.4V324.4M202.0 322.4V324.4M202.5 322.4V324.4M203.0 322.4V324.4M203.5 322.4V324.4M204.0 322.4V324.4M204.5 321.3V324.4M205.0 322.4V324.4M205.5 322.4V324.4M206.0 322.4V324.4M206.5 322.4V324.4M207.0 322.4V324.4M207.5 322.4V324.4M208.0 322.4V324.4M208.5 322.4V324.4M209.0 322.4V324.4M209.5 322.4V324.4M210.0 322.4V324.4M210.5 322.4V324.4M211.0 322.4V324.4M211.5 322.4V324.4M212.0 322.4V324.4M212.5 322.4V324.4M213.0 322.4V324.4M213.5 322.4V324.4M214.0 322.4V327.1M214.5 322.4V324.4M215.0 322.4V324.4M215.5 322.4V324.4M216.0 322.4V324.4M216.5 322.4V324.4M217.0 322.4V324.4M217.5 322.4V324.4M218.0 322.4V324.4M218.5 322.4V324.4M219.0 322.4V324.4M219.5 322.4V324.4M220.0 322.4V324.4M220.5 322.4V324.4M221.0 319.7V324.4M221.5 322.4V324.4M222.0 305.8V324.4M222.5 305.8V324.4M223.0 305.8V324.4M223.5 322.4V324.4M224.0 322.4V324.4M224.5 322.4V324.4M225.0 322.4V324.4M225.5 322.4V326.5M226.0 322.4V324.4M226.5 322.4V324.4M227.0 322.4V324.4M227.5 322.4V324.4M228.0 322.4V324.4M228.5 322.4V324.4M229.0 322.4V324.4M229.5 322.4V324.4M230.0 322.4V324.4M230.5 322.4V324.4M231.0 322.4V324.4M231.5 322.4V324.4M232.0 322.4V324.4M232.5 322.4V324.4M233.0 322.4V324.4M233.5 322.4V324.4M234.0 322.4V324.4M234.5 322.4V324.4M235.0 322.4V324.4M235.5 322.4V324.4M236.0 322.4V324.4M236.5 322.4V324.4M237.0 322.4V324.4M237.5 321.5V324.4M238.0 322.4V325.3M238.5 322.4V324.4M239.0 322.4V324.4M239.5 322.4V324.4M240.0 322.4V324.4M240.5 322.4V324.4M241.0 322.4V324.4M241.5 322.4V324.4M242.0 322.4V325.5M242.5 322.4V324.4M243.0 322.4V324.4M243.5 322.4V324.4M244.0 322.4V324.4M244.5 322.4V324.4M245.0 322.4V324.4M245.5 322.4V324.4M246.0 322.4V324.4M246.5 322.4V324.4M247.0 322.4V324.4M247.5 322.4V324.4M248.0 322.4V324.4M248.5 322.4V324.4M249.0 322.4V324.4M249.5 322.4V324.4M250.0 322.4V324.4M250.5 322.4V324.4M251.0 322.4V324.4M251.5 306.5V324.4M252.0 306.5V324.4M252.5 306.5V324.4M253.0 322.4V324.4M253.5 322.4V324.4M254.0 321.8V324.4M254.5 322.4V324.4M255.0 322.4V326.8M255.5 322.4V324.4M256.0 322.4V324.4M256.5 322.4V324.4M257.0 322.4V324.4M257.5 322.4V324.4M258.0 322.4V324.4M258.5 322.4V324.4M259.0 322.4V324.4M259.5 322.4V324.4M260.0 322.4V324.4M260.5 322.4V324.4M261.0 322.4V324.4M261.5 322.4V324.4M262.0 286.5V324.5M262.5 286.5V324.5M263.0 286.5V324.5M263.5 286.5V298.4M264.0 286.9V303.1M264.5 291.6V303.1M265.0 292.6V303.1M265.5 288.5V303.1M266.0 284.4V299.0M266.5 277.9V294.9M267.0 271.4V290.7M267.5 257.6V286.6M268.0 250.4V280.1M268.5 249.4V273.6M269.0 248.4V259.9M269.5 247.4V252.6M270.0 246.4V251.6M270.5 245.7V250.6M271.0 245.0V249.6M271.5 243.6V248.6M272.0 242.9V247.9M272.5 242.1V247.2M273.0 240.0V246.5M273.5 240.0V246.5M274.0 239.7V246.5M274.5 238.9V246.5M275.0 238.1V246.5M275.5 238.1V246.5M276.0 238.1V246.5M276.5 238.1V246.5M277.0 239.0V246.5M277.5 239.9V246.5M278.0 240.0V246.9M278.5 242.6V248.2M279.0 243.5V249.4M279.5 244.7V250.7M280.0 246.0V251.9M280.5 247.2V261.2M281.0 248.5V265.8M281.5 249.7V268.6M282.0 259.0V271.4M282.5 263.6V274.1M283.0 266.4V276.9M283.5 269.2V285.3M284.0 271.9V290.8M284.5 274.7V296.4M285.0 283.1V302.4M285.5 288.6V308.4M286.0 294.2V314.4M286.5 300.2V315.7M287.0 291.8V315.7M287.5 291.8V316.1M288.0 291.8V316.1M288.5 305.1V316.1M289.0 305.1V316.1M289.5 293.9V316.1M290.0 293.9V316.1M290.5 293.9V316.1M291.0 313.1V316.1M291.5 313.1V316.1M292.0 313.1V316.1M292.5 313.1V316.1M293.0 313.1V316.1M293.5 313.1V318.0M294.0 313.1V316.1M294.5 313.1V316.1M295.0 313.1V316.1M295.5 313.1V317.0M296.0 313.1V316.1M296.5 313.1V316.1M297.0 313.1V316.1M297.5 313.1V316.1M298.0 313.1V316.1M298.5 313.1V316.1M299.0 313.1V316.1M299.5 313.1V316.1M300.0 313.1V316.1M300.5 306.1V316.1M301.0 305.7V316.1M301.5 301.8V316.1M302.0 297.9V316.1M302.5 286.7V316.1M303.0 286.7V316.1M303.5 286.7V316.1M304.0 302.6V316.1M304.5 306.1V316.1M305.0 306.1V316.1M305.5 298.7V316.1M306.0 298.7V316.1M306.5 298.1V316.1M307.0 306.1V316.1M307.5 313.1V316.1M308.0 313.1V316.1M308.5 313.1V316.1M309.0 313.1V316.1M309.5 313.1V316.1M310.0 313.1V316.1M310.5 313.1V316.1M311.0 313.1V316.1M311.5 313.1V316.1M312.0 311.1V316.1M312.5 313.1V316.1M313.0 313.1V316.1M313.5 313.1V316.1M314.0 313.1V316.1M314.5 313.1V316.1M315.0 313.1V316.1M315.5 311.8V316.1M316.0 309.9V316.1M316.5 308.1V316.1M317.0 306.3V316.1M317.5 304.5V316.1M318.0 302.6V316.1M318.5 299.2V316.1M319.0 299.0V316.1M319.5 289.5V316.1M320.0 289.5V316.1M320.5 287.6V316.1M321.0 302.6V316.1M321.5 313.1V316.1M322.0 313.1V316.1M322.5 313.1V316.1M323.0 313.1V316.1M323.5 313.1V316.1M324.0 313.1V316.1M324.5 313.1V316.1M325.0 313.1V316.1M325.5 313.1V316.1M326.0 313.1V316.1M326.5 313.1V316.1M327.0 313.1V316.1M327.5 313.1V316.1M328.0 313.1V317.3M328.5 313.1V316.1M329.0 313.1V316.1M329.5 313.1V316.1M330.0 313.1V316.1M330.5 313.1V316.1M331.0 313.1V316.1M331.5 311.8V316.1M332.0 309.9V316.1M332.5 308.1V318.3M333.0 306.3V316.1M333.5 304.5V316.1M334.0 302.6V316.1M334.5 299.6V316.1M335.0 299.0V316.1M335.5 289.5V316.1M336.0 289.5V316.1M336.5 289.5V316.1M337.0 302.6V316.1M337.5 313.1V316.1M338.0 313.1V316.1M338.5 313.1V316.1M339.0 313.1V316.1M339.5 311.6V316.1M340.0 313.1V316.1M340.5 313.1V316.1M341.0 313.1V316.1M341.5 313.1V316.1M342.0 313.1V316.1M342.5 312.0V316.1M343.0 313.1V316.1M343.5 313.1V316.1M344.0 313.1V316.1M344.5 313.1V316.1M345.0 313.1V316.1M345.5 313.1V316.1M346.0 313.1V316.1M346.5 313.1V316.1M347.0 311.5V316.1M347.5 309.3V316.1M348.0 307.2V316.1M348.5 305.0V316.1M349.0 302.9V316.1M349.5 300.7V316.1M350.0 298.6V316.1M350.5 296.4V316.1M351.0 286.7V316.1M351.5 286.7V316.1M352.0 286.7V316.1M352.5 302.6V316.1M353.0 313.1V316.1M353.5 313.1V316.1M354.0 313.1V316.1M354.5 313.1V316.1M355.0 313.1V316.1M355.5 312.0V316.1M356.0 313.1V316.1M356.5 313.1V316.1M357.0 313.1V316.1M357.5 313.1V316.1M358.0 313.1V316.1M358.5 313.1V316.1M359.0 313.1V316.1M359.5 313.1V316.1M360.0 313.1V316.1M360.5 313.1V317.7M361.0 313.1V316.1M361.5 313.1V316.1M362.0 313.1V316.1M362.5 312.1V316.1M363.0 311.5V316.1M363.5 309.3V316.1M364.0 307.2V316.1M364.5 305.0V316.1M365.0 302.9V316.1M365.5 300.7V316.1M366.0 298.6V316.1M366.5 296.4V316.1M367.0 285.6V316.1M367.5 286.7V316.1M368.0 286.7V316.1M368.5 302.6V316.1M369.0 313.1V316.1M369.5 311.4V316.1M370.0 313.1V316.1M370.5 312.5V316.1M371.0 313.1V316.1M371.5 313.1V316.1M372.0 313.1V316.1M372.5 313.1V316.1M373.0 313.1V316.1M373.5 313.1V316.1M374.0 313.1V316.1M374.5 313.1V316.1M375.0 313.1V316.1M375.5 313.1V316.1M376.0 313.1V316.1M376.5 313.1V316.1M377.0 313.1V319.3M377.5 313.1V316.1M378.0 313.1V316.1M378.5 311.9V316.1M379.0 311.8V316.1M379.5 310.0V316.1M380.0 308.2V316.1M380.5 306.4V316.1M381.0 304.6V316.1M381.5 302.8V316.1M382.0 301.0V316.1M382.5 299.2V316.1M383.0 289.8V316.1M383.5 289.8V316.1M384.0 289.8V316.1M384.5 302.6V316.1M385.0 313.1V316.1M385.5 313.1V316.1M386.0 313.1V316.1M386.5 313.1V316.1M387.0 313.1V316.1M387.5 311.5V316.1M388.0 313.1V316.1M388.5 311.8V316.1M389.0 313.1V316.1M389.5 313.1V316.1M390.0 313.1V316.1M390.5 313.1V316.1M391.0 313.1V316.1M391.5 311.9V316.1M392.0 313.1V316.1M392.5 313.1V316.1M393.0 313.1V316.1M393.5 313.1V316.1M394.0 313.1V316.1M394.5 311.8V316.1M395.0 310.0V316.1M395.5 308.2V316.1M396.0 306.4V316.1M396.5 304.6V316.1M397.0 302.8V316.1M397.5 301.0V316.1M398.0 299.2V316.1M398.5 289.8V316.1M399.0 289.8V316.1M399.5 289.8V316.1M400.0 302.6V316.1M400.5 313.1V316.1M401.0 313.1V316.1M401.5 313.1V316.1M402.0 313.1V316.1M402.5 313.1V316.1M403.0 313.1V316.1M403.5 313.1V316.1M404.0 313.1V316.1M404.5 313.1V316.1M405.0 313.1V316.1M405.5 313.1V316.1M406.0 313.1V316.1M406.5 313.1V316.1M407.0 313.1V316.1M407.5 313.1V316.1M408.0 313.1V316.1M408.5 313.1V316.1M409.0 312.4V316.1M409.5 313.1V316.1M410.0 309.1V316.1M410.5 309.1V316.1M411.0 308.1V316.1M411.5 306.3V316.1M412.0 304.5V316.1M412.5 302.6V316.1M413.0 300.8V316.1M413.5 299.0V316.1M414.0 289.5V316.1M414.5 289.5V316.1M415.0 289.5V316.1M415.5 302.6V316.1M416.0 302.6V316.1M416.5 309.1V316.1M417.0 309.1V316.1M417.5 309.1V316.1M418.0 309.1V316.1M418.5 309.1V316.1M419.0 309.1V316.1M419.5 307.4V316.1M420.0 310.1V315.7M420.5 308.3V315.7M421.0 306.6V314.0M421.5 304.9V312.3M422.0 303.2V310.5M422.5 301.6V308.8M423.0 299.9V307.1M423.5 298.3V305.4M424.0 296.7V303.8M424.5 293.6V302.1M425.0 292.1V300.5M425.5 290.7V298.9M426.0 289.2V295.8M426.5 287.9V294.3M427.0 286.5V292.9M427.5 285.2V291.4M428.0 284.0V290.1M428.5 282.8V288.7M429.0 281.6V287.4M429.5 280.5V286.2M430.0 279.5V285.0M430.5 278.5V283.8M431.0 277.6V282.7M431.5 276.7V281.7M432.0 275.9V280.7M432.5 275.1V279.8M433.0 274.4V278.9M433.5 273.8V278.1M434.0 273.2V277.3M434.5 272.7V276.6M435.0 271.9V278.2M435.5 271.9V277.6M436.0 271.9V277.1M436.5 271.9V277.1M437.0 271.9V277.1M437.5 271.9V277.1M438.0 271.9V277.1M438.5 271.9V277.1M439.0 271.9V277.1M439.5 271.9V277.1M440.0 271.9V277.1M440.5 271.9V277.1M441.0 271.9V277.1M441.5 271.9V277.1M442.0 271.9V277.1M442.5 271.9V277.1M443.0 271.9V277.1M443.5 271.9V277.1M444.0 271.9V277.1M444.5 271.9V277.1M445.0 272.7V276.3M445.5 272.7V277.9M446.0 272.7V279.6M446.5 274.1V281.4M447.0 275.7V283.3M447.5 277.4V285.2M448.0 279.2V289.0M448.5 281.1V291.0M449.0 283.0V293.1M449.5 286.8V295.1M450.0 288.8V297.2M450.5 290.9V299.3M451.0 292.9V301.4M451.5 295.0V303.5M452.0 297.1V305.7M452.5 299.2V307.8M453.0 301.3V310.0M453.5 303.5V312.2M454.0 303.6V315.9M454.5 305.8V318.1M455.0 308.0V318.2M455.5 310.2V318.2M456.0 312.4V318.2M456.5 312.4V318.3M457.0 312.5V318.4M457.5 312.5V318.4M458.0 312.6V318.5M458.5 312.6V318.5M459.0 312.7V318.6M459.5 312.8V318.6M460.0 285.7V318.6M460.5 287.7V317.1M461.0 287.7V317.1M461.5 300.0V315.5M462.0 300.0V313.8M462.5 300.0V312.2M463.0 303.6V310.6M463.5 302.0V308.9M464.0 300.4V307.3M464.5 298.9V305.8M465.0 297.4V304.2M465.5 295.9V302.6M466.0 294.4V301.1M466.5 293.0V299.6M467.0 291.6V298.1M467.5 290.2V296.6M468.0 288.9V295.2M468.5 287.6V293.8M469.0 286.4V292.4M469.5 285.1V291.1M470.0 284.0V289.8M470.5 282.8V288.6M471.0 281.7V287.3M471.5 280.7V286.2M472.0 279.7V285.0M472.5 278.8V283.9M473.0 277.9V282.9M473.5 277.0V281.9M474.0 275.5V281.0M474.5 274.8V280.1M475.0 274.1V279.2M475.5 273.5V277.7M476.0 273.0V277.0M476.5 272.5V276.3M477.0 271.7V277.9M477.5 271.7V277.4M478.0 271.7V276.9M478.5 271.7V276.9M479.0 271.7V276.9M479.5 271.7V276.9M480.0 271.7V276.9M480.5 271.7V276.9M481.0 271.7V276.9M481.5 271.7V276.9M482.0 271.7V276.9M482.5 271.7V276.9M483.0 271.7V276.9M483.5 271.7V276.9M484.0 271.7V276.9M484.5 271.7V276.9M485.0 271.7V276.9M485.5 271.7V276.9M486.0 271.7V276.9M486.5 271.7V276.9M487.0 272.5V276.6M487.5 272.5V278.8M488.0 272.5V281.1M488.5 274.4V283.6M489.0 276.6V286.1M489.5 278.9V288.7M490.0 281.4V291.3M490.5 283.9V294.0M491.0 286.5V296.7M491.5 289.1V299.5M492.0 291.8V302.2M492.5 294.5V305.1M493.0 297.3V307.9M493.5 300.0V310.8M494.0 302.9V313.7M494.5 305.7V316.6M495.0 306.6V318.1M495.5 309.5V318.2M496.0 312.4V318.2M496.5 312.4V318.2M497.0 312.5V318.3M497.5 312.5V318.3M498.0 312.5V318.3M498.5 312.6V318.4M499.0 312.6V318.4M499.5 312.6V318.4M500.0 312.6V318.4M500.5 312.7V318.5M501.0 312.7V318.5M501.5 312.7V318.6M502.0 312.8V318.6M502.5 311.5V318.6M503.0 312.1V317.1M503.5 310.7V317.1M504.0 309.3V315.7M504.5 308.0V314.3M505.0 306.6V312.9M505.5 305.2V311.5M506.0 303.9V310.2M506.5 292.0V308.8M507.0 292.0V307.4M507.5 292.0V306.1M508.0 298.6V304.7M508.5 297.3V303.4M509.0 296.1V302.1M509.5 294.8V300.8M510.0 293.6V299.5M510.5 292.4V298.3M511.0 291.2V297.0M511.5 290.1V295.8M512.0 288.9V294.6M512.5 287.8V293.4M513.0 286.8V292.3M513.5 285.7V291.1M514.0 284.7V290.0M514.5 283.7V289.0M515.0 282.8V287.9M515.5 281.8V286.9M516.0 281.0V285.9M516.5 280.1V285.0M517.0 279.3V284.0M517.5 278.5V283.2M518.0 277.8V282.3M518.5 277.0V281.5M519.0 276.4V280.7M519.5 275.7V280.0M520.0 275.1V279.2M520.5 274.6V278.6M521.0 274.0V277.9M521.5 273.6V277.3M522.0 272.3V279.3M522.5 271.9V278.7M523.0 271.9V278.3M523.5 271.9V277.8M524.0 271.9V277.4M524.5 271.9V277.4M525.0 271.9V277.4M525.5 271.9V277.4M526.0 271.9V277.4M526.5 271.9V277.4M527.0 271.9V278.5M527.5 271.9V279.7M528.0 271.9V281.1M528.5 273.8V279.9M529.0 275.0V281.4M529.5 276.4V282.8M530.0 277.7V284.3M530.5 279.2V285.9M531.0 280.6V287.4M531.5 282.1V290.6M532.0 283.7V292.2M532.5 285.2V293.8M533.0 288.4V295.4M533.5 290.0V297.1M534.0 291.6V298.7M534.5 293.2V300.4M535.0 294.9V302.1M535.5 296.5V303.8M536.0 298.2V305.5M536.5 296.4V308.0M537.0 298.1V308.0M537.5 284.2V308.0M538.0 284.2V308.0M538.5 284.2V308.0M539.0 299.8V308.0M539.5 288.5V308.0M540.0 288.5V308.0M540.5 288.5V308.0M541.0 299.8V308.0M541.5 299.8V308.0M542.0 299.8V308.0M542.5 299.8V308.0M543.0 299.8V308.0M543.5 298.9V308.0M544.0 301.6V305.5M544.5 300.7V305.5M545.0 299.8V304.6M545.5 298.9V303.8M546.0 298.1V302.9M546.5 297.2V302.0M547.0 296.4V301.1M547.5 295.5V300.3M548.0 294.7V299.4M548.5 293.9V298.6M549.0 293.0V297.7M549.5 292.2V296.9M550.0 291.4V296.1M550.5 290.6V295.2M551.0 289.9V294.4M551.5 289.1V293.6M552.0 288.3V292.8M552.5 287.6V292.1M553.0 286.9V291.3M553.5 286.2V290.5M554.0 285.5V289.8M554.5 284.8V289.1M555.0 284.1V288.4M555.5 283.5V287.7M556.0 282.8V287.0M556.5 282.2V286.3M557.0 281.6V285.7M557.5 281.0V285.0M558.0 280.5V284.4M558.5 280.0V283.8M559.0 279.4V283.2M559.5 278.9V282.7M560.0 278.5V282.2M560.5 278.0V281.6M561.0 277.6V281.1M561.5 277.2V280.7M562.0 276.8V280.2M562.5 276.1V279.8M563.0 275.7V282.4M563.5 275.4V282.0M564.0 275.2V281.3M564.5 273.5V280.9M565.0 273.5V280.6M565.5 273.5V280.4M566.0 273.5V281.6M566.5 273.5V283.4M567.0 274.9V285.3M567.5 276.4V287.3M568.0 278.2V289.3M568.5 280.1V288.4M569.0 282.1V290.5M569.5 284.1V294.9M570.0 286.2V297.1M570.5 288.3V299.3M571.0 292.7V301.6M571.5 294.9V303.9M572.0 297.1V306.2M572.5 299.4V308.6M573.0 301.7V310.9M573.5 304.0V313.3M574.0 306.4V315.7M574.5 308.7V315.7M575.0 310.7V316.1M575.5 311.6V316.1M576.0 313.1V316.1M576.5 313.1V316.1M577.0 313.1V316.1M577.5 313.1V316.1M578.0 313.1V316.1M578.5 312.0V316.1M579.0 313.1V316.1M579.5 313.1V316.1M580.0 311.6V316.1M580.5 305.4V316.1M581.0 305.4V316.1M581.5 313.1V316.1M582.0 313.1V316.1M582.5 310.6V316.1M583.0 307.5V316.1M583.5 304.5V316.1M584.0 301.4V316.1M584.5 298.4V316.1M585.0 289.8V316.1M585.5 289.8V316.1M586.0 302.6V316.1M586.5 313.1V316.1M587.0 313.1V316.1M587.5 313.1V317.9M588.0 313.1V316.1M588.5 313.1V316.1M589.0 313.1V316.1M589.5 313.1V316.1M590.0 313.1V316.1M590.5 313.1V318.5M591.0 313.1V316.1M591.5 313.1V317.7M592.0 313.1V316.1M592.5 313.1V316.1M593.0 313.1V316.1M593.5 313.1V316.1M594.0 313.1V316.1M594.5 313.1V316.1M595.0 313.1V316.1M595.5 313.1V316.1M596.0 313.1V316.1M596.5 313.1V316.1M597.0 313.1V316.1M597.5 313.1V316.1M598.0 311.0V316.1M598.5 308.3V316.1M599.0 305.7V317.8M599.5 303.1V316.1M600.0 300.4V316.1M600.5 289.8V316.1M601.0 289.8V316.1M601.5 289.8V316.1M602.0 302.6V316.1M602.5 313.1V316.1M603.0 313.1V316.1M603.5 313.1V316.1M604.0 313.1V316.1M604.5 301.0V316.1M605.0 301.0V316.1M605.5 313.1V316.1M606.0 313.1V316.1M606.5 313.1V316.1M607.0 313.1V316.1M607.5 313.1V316.1M608.0 313.1V316.1M608.5 313.1V318.9M609.0 311.9V319.2M609.5 311.9V318.3M610.0 311.9V318.3M610.5 311.9V318.3M611.0 311.9V318.3M611.5 311.9V318.3M612.0 303.8V318.3M612.5 311.9V318.3M613.0 311.9V318.3M613.5 309.8V318.3M614.0 307.1V318.3M614.5 304.5V320.3M615.0 301.9V318.3M615.5 299.2V318.3M616.0 288.6V318.3M616.5 288.6V318.3M617.0 288.6V318.3M617.5 301.4V318.3M618.0 311.9V318.3M618.5 311.9V318.3M619.0 311.9V318.3M619.5 310.6V318.3M620.0 311.9V319.0M620.5 311.9V318.3M621.0 311.9V318.3M621.5 311.9V318.3M622.0 311.9V319.9M622.5 311.9V318.3M623.0 311.9V318.3M623.5 311.9V318.3M624.0 311.9V318.3M624.5 311.9V318.3M625.0 311.9V318.3M625.5 311.9V318.3M626.0 311.9V318.3M626.5 311.9V318.3M627.0 311.9V318.3M627.5 311.9V318.3M628.0 311.9V318.3M628.5 311.9V318.3M629.0 311.9V318.3M629.5 300.2V318.3M630.0 301.8V318.3M630.5 304.5V318.3M631.0 301.9V318.3M631.5 299.2V318.3M632.0 288.6V318.3M632.5 288.6V318.3M633.0 288.6V318.3M633.5 301.4V318.3M634.0 311.9V318.3M634.5 311.9V318.3M635.0 311.9V318.3M635.5 311.2V318.3M636.0 311.9V318.3M636.5 311.9V318.3M637.0 311.9V318.3M637.5 311.9V318.3M638.0 311.9V318.3M638.5 311.9V318.3M639.0 311.9V318.3M639.5 311.9V318.3M640.0 311.9V318.3M640.5 311.9V318.3M641.0 311.9V318.3M641.5 311.9V318.3M642.0 311.9V318.3M642.5 311.9V318.3M643.0 311.9V318.3M643.5 310.6V318.3M644.0 308.8V318.3M644.5 307.0V318.3M645.0 302.8V318.3M645.5 303.4V318.3M646.0 301.6V318.3M646.5 299.8V318.3M647.0 298.0V318.3M647.5 288.6V318.3M648.0 288.6V318.3M648.5 288.6V318.3M649.0 301.4V319.6M649.5 311.9V318.3M650.0 311.9V318.3M650.5 311.9V318.3M651.0 311.9V318.3M651.5 311.9V318.3M652.0 311.2V318.3M652.5 311.9V318.3M653.0 311.9V318.3M653.5 311.9V318.3M654.0 311.9V318.3M654.5 311.9V318.3M655.0 311.9V318.3M655.5 311.9V318.3M656.0 312.1V315.7M656.5 310.6V315.7M657.0 309.2V315.7M657.5 307.8V314.3M658.0 306.3V312.8M658.5 303.5V311.4M659.0 302.1V310.0M659.5 300.8V308.5M660.0 299.4V305.7M660.5 298.1V304.3M661.0 296.8V303.0M661.5 295.5V301.6M662.0 294.2V300.3M662.5 293.0V299.0M663.0 291.8V297.7M663.5 290.6V296.4M664.0 289.4V295.2M664.5 288.3V294.0M665.0 287.2V292.8M665.5 286.2V291.6M666.0 285.2V290.5M666.5 284.2V289.4M667.0 283.2V288.4M667.5 282.3V287.4M668.0 281.5V286.4M668.5 280.6V285.4M669.0 279.9V284.5M669.5 279.1V283.7M670.0 278.4V282.8M670.5 277.8V282.1M671.0 277.2V281.3M671.5 276.6V280.6M672.0 276.1V280.0M672.5 275.6V279.4M673.0 275.2V278.8M673.5 274.6V280.5M674.0 274.6V280.0M674.5 274.6V279.6M675.0 274.2V279.6M675.5 274.6V279.6M676.0 274.6V279.6M676.5 274.6V279.6M677.0 274.6V279.6M677.5 274.6V279.6M678.0 274.6V279.6M678.5 274.6V279.6M679.0 274.6V279.6M679.5 274.6V279.6M680.0 274.6V279.6M680.5 274.6V279.6M681.0 274.6V279.6M681.5 274.6V279.6M682.0 274.2V279.6M682.5 274.6V279.6M683.0 274.6V280.8M683.5 275.2V279.9M684.0 275.2V281.4M684.5 276.4V282.9M685.0 277.7V284.5M685.5 279.2V286.1M686.0 280.7V287.8M686.5 282.3V289.4M687.0 283.9V291.1M687.5 285.6V292.8M688.0 287.2V294.6M688.5 288.9V296.3M689.0 290.6V298.1M689.5 292.4V299.9M690.0 294.1V301.7M690.5 295.9V303.5M691.0 297.7V305.4M691.5 299.5V307.2M692.0 301.3V309.1M692.5 300.7V313.1M693.0 299.3V313.1M693.5 304.4V313.1M694.0 304.4V313.1M694.5 304.4V313.1M695.0 304.4V313.1M695.5 304.4V313.1M696.0 304.4V313.1M696.5 304.4V313.1M697.0 291.0V313.1M697.5 291.0V313.1M698.0 291.0V313.1M698.5 304.4V313.1M699.0 304.4V313.1M699.5 304.4V313.1M700.0 305.6V309.1M700.5 304.3V309.1M701.0 303.0V309.1M701.5 301.7V307.8M702.0 300.5V306.5M702.5 299.2V305.2M703.0 298.0V303.9M703.5 296.7V302.7M704.0 295.5V301.4M704.5 294.3V300.2M705.0 293.2V298.9M705.5 292.0V297.7M706.0 290.9V296.5M706.5 289.8V295.4M707.0 287.7V294.2M707.5 286.7V293.1M708.0 285.8V292.0M708.5 284.9V289.9M709.0 284.0V288.9M709.5 283.2V288.0M710.0 282.4V287.1M710.5 281.6V286.2M711.0 280.9V285.4M711.5 280.2V284.6M712.0 279.6V283.8M712.5 279.0V283.1M713.0 278.5V282.4M713.5 278.0V281.8M714.0 277.6V281.2M714.5 277.2V280.7M715.0 276.6V282.2M715.5 276.6V281.8M716.0 276.6V281.4M716.5 276.6V281.4M717.0 276.6V281.4M717.5 276.6V281.4M718.0 276.6V281.4M718.5 276.6V281.4M719.0 276.6V281.4M719.5 276.6V281.4M720.0 276.6V281.4M720.5 276.6V281.4M721.0 275.0V281.4M721.5 276.6V281.4M722.0 276.6V281.4M722.5 277.2V280.8M723.0 277.2V282.5M723.5 277.2V284.3M724.0 278.6V286.1M724.5 280.3V288.0M725.0 282.1V290.0M725.5 283.9V292.0M726.0 285.8V294.0M726.5 287.8V296.1M727.0 289.8V298.1M727.5 291.8V300.3M728.0 293.9V302.4M728.5 295.9V306.7M729.0 298.1V308.9M729.5 300.2V311.1M730.0 304.5V313.4M730.5 306.7V315.6M731.0 306.9V317.6M731.5 309.2V317.7M732.0 311.4V317.7M732.5 311.4V317.7M733.0 311.5V317.7M733.5 311.5V317.8M734.0 311.5V317.8M734.5 311.5V317.8M735.0 311.6V317.9M735.5 311.6V317.9M736.0 311.6V317.9M736.5 311.6V317.9M737.0 311.7V318.0M737.5 311.7V318.0M738.0 311.7V318.0M738.5 311.8V318.0M739.0 311.8V318.1M739.5 313.8V316.1M740.0 312.5V316.1M740.5 289.2V316.1M741.0 289.2V316.1M741.5 289.2V314.7M742.0 307.1V313.4M742.5 305.8V312.0M743.0 294.0V310.6M743.5 294.0V309.3M744.0 301.8V308.0M744.5 300.5V306.6M745.0 299.2V305.3M745.5 298.0V304.0M746.0 296.7V302.7M746.5 295.5V301.4M747.0 294.3V300.2M747.5 293.1V298.9M748.0 292.0V297.7M748.5 290.9V296.5M749.0 289.8V295.3M749.5 288.7V294.2M750.0 287.7V293.1M750.5 286.7V292.0M751.0 284.8V290.9M751.5 283.8V289.9M752.0 283.0V288.9M752.5 282.1V287.0M753.0 281.3V286.0M753.5 280.6V285.2M754.0 279.9V284.3M754.5 279.2V283.5M755.0 278.5V282.8M755.5 277.9V282.1M756.0 277.4V281.4M756.5 276.8V280.7M757.0 276.3V280.1M757.5 275.9V283.1M758.0 275.5V282.5M758.5 275.1V282.0M759.0 274.5V281.6M759.5 274.3V281.2M760.0 273.9V280.8M760.5 273.9V280.9M761.0 273.9V281.6M761.5 273.9V282.2M762.0 275.2V283.2M762.5 275.9V284.1M763.0 276.5V281.6M763.5 277.5V283.6M764.0 278.4V284.5M764.5 279.4V285.5M765.0 281.4V286.2M765.5 282.3V287.0M766.0 283.3V287.7M766.5 284.0V288.5M767.0 284.8V289.2M767.5 285.5V290.0M768.0 286.3V291.5M768.5 287.0V292.2M769.0 287.8V293.6M769.5 289.3V294.9M770.0 290.0V296.2M770.5 291.4V297.6M771.0 292.7V303.6M771.5 287.0V309.6M772.0 287.0V315.6M772.5 287.0V315.6M773.0 305.9V317.6M773.5 311.9V317.7M774.0 311.9V317.7M774.5 311.9V317.7M775.0 312.0V317.7M775.5 312.0V317.8M776.0 312.0V317.8M776.5 312.0V317.8M777.0 312.1V317.8M777.5 312.1V317.8M778.0 312.1V317.9M778.5 312.1V317.9M779.0 312.1V317.9M779.5 312.2V317.9M780.0 312.2V317.9M780.5 312.2V318.0M781.0 312.2V318.0M781.5 312.2V318.0M782.0 312.3V318.0M782.5 312.3V318.1M783.0 312.3V318.1M783.5 312.3V318.1M784.0 311.3V318.1M784.5 311.7V316.1M785.0 310.5V316.1M785.5 308.3V315.0M786.0 307.2V313.9M786.5 306.7V312.8M787.0 289.0V310.5M787.5 289.0V309.4M788.0 289.0V308.9M788.5 304.8V308.5M789.0 304.4V308.0M789.5 303.9V307.5M790.0 303.7V307.0M790.5 303.6V306.6M791.0 303.4V306.1M791.5 303.2V305.9M792.0 303.1V305.8M792.5 302.9V305.6M793.0 301.7V306.6M793.5 301.7V306.5M794.0 301.7V306.3M794.5 301.7V306.3M795.0 301.7V306.3M795.5 301.7V306.3M796.0 301.7V306.3M796.5 301.7V306.3M797.0 301.7V306.3M797.5 301.7V306.3M798.0 301.7V306.3M798.5 301.7V306.3M799.0 301.7V306.3M799.5 301.7V306.3M800.0 301.7V306.3M800.5 301.7V306.3M801.0 301.7V306.3M801.5 301.7V306.3M802.0 289.0V306.3M802.5 289.0V306.3M803.0 289.0V306.3M803.5 301.7V306.3M804.0 301.7V306.3M804.5 301.7V306.3M805.0 301.7V306.3M805.5 301.7V306.3M806.0 301.7V306.3M806.5 301.7V306.3M807.0 301.7V306.3M807.5 301.7V306.3M808.0 301.7V306.3M808.5 301.7V306.3M809.0 301.7V306.3M809.5 301.7V306.3M810.0 301.7V306.3M810.5 301.7V306.3M811.0 301.7V306.3M811.5 301.7V306.3M812.0 301.7V317.3M812.5 300.9V318.1M813.0 300.9V318.1M813.5 311.9V318.1M814.0 311.9V318.1M814.5 311.9V318.1M815.0 311.9V318.1M815.5 311.9V318.1M816.0 311.9V318.1M816.5 311.9V318.1M817.0 311.9V318.1M817.5 311.9V318.1M818.0 311.1V318.1M818.5 308.1V318.1M819.0 305.2V318.1M819.5 302.3V318.1M820.0 299.3V318.1M820.5 289.0V318.1M821.0 289.0V318.1M821.5 289.0V318.1M822.0 303.0V318.1M822.5 311.9V318.1M823.0 311.9V318.1M823.5 311.9V318.1M824.0 311.9V318.1M824.5 311.9V318.1M825.0 311.9V318.1M825.5 311.9V318.1M826.0 311.9V318.1M826.5 311.9V318.1M827.0 311.9V318.1M827.5 311.9V318.1M828.0 311.9V318.1M828.5 311.9V318.1M829.0 311.9V318.1M829.5 311.9V318.1M830.0 311.9V318.1M830.5 311.9V318.1M831.0 311.9V318.1M831.5 311.9V318.1M832.0 311.9V318.1M832.5 311.9V318.1M833.0 311.9V318.1M833.5 311.9V318.1M834.0 311.9V318.1M834.5 311.9V318.1M835.0 308.2V318.1M835.5 302.4V318.1M836.0 296.7V318.1M836.5 287.5V318.1M837.0 287.5V318.1M837.5 303.0V318.1M838.0 303.0V324.5M838.5 313.9V324.5M839.0 314.0V324.4M839.5 322.4V324.4M840.0 322.4V324.4M840.5 322.4V324.4M841.0 322.4V324.4M841.5 322.4V324.4M842.0 322.4V324.4M842.5 322.4V324.4M843.0 322.4V326.0M843.5 320.7V324.4M844.0 322.4V324.4M844.5 322.4V326.8M845.0 322.4V324.4M845.5 321.9V324.4M846.0 322.4V324.4M846.5 322.4V324.4M847.0 304.4V324.4M847.5 306.7V324.4M848.0 306.7V324.4M848.5 322.4V324.4M849.0 322.4V324.4M849.5 322.4V324.4M850.0 322.4V324.4M850.5 320.6V324.4M851.0 322.4V324.4M851.5 322.4V326.4M852.0 322.4V324.4M852.5 322.4V325.0M853.0 322.4V324.4M853.5 322.4V324.4M854.0 322.4V324.4M854.5 322.4V324.4M855.0 322.4V324.4M855.5 322.4V324.4M856.0 322.4V325.4M856.5 321.8V324.4M857.0 322.4V324.4M857.5 322.4V324.4M858.0 322.4V324.4M858.5 322.4V324.4M859.0 322.4V324.4M859.5 322.4V324.4M860.0 322.4V324.4M860.5 322.4V324.4M861.0 321.9V324.4M861.5 322.4V324.4M862.0 322.4V324.4M862.5 322.4V324.4M863.0 322.4V324.4M863.5 322.4V324.4M864.0 322.4V325.9M864.5 322.4V324.4M865.0 322.4V324.4M865.5 322.4V324.4M866.0 322.4V324.4M866.5 322.4V324.4M867.0 322.4V324.4M867.5 322.4V324.4M868.0 322.4V324.4M868.5 322.4V324.4M869.0 322.4V324.4M869.5 322.4V324.4M870.0 322.4V324.4M870.5 321.8V324.4M871.0 322.4V324.4M871.5 322.4V324.4M872.0 322.4V324.4M872.5 322.4V327.0M873.0 322.4V324.4M873.5 322.4V324.4M874.0 322.4V324.4M874.5 322.4V324.4M875.0 322.4V324.4M875.5 322.4V324.4M876.0 322.4V324.4M876.5 322.4V324.4M877.0 322.4V324.4M877.5 322.4V324.4M878.0 322.4V324.4M878.5 322.4V324.4M879.0 322.4V324.4M879.5 322.4V324.4M880.0 322.4V324.4M880.5 321.0V324.4M881.0 322.4V324.4M881.5 322.4V324.4M882.0 322.4V324.4M882.5 321.8V324.4M883.0 322.4V324.4M883.5 321.3V324.4M884.0 322.4V324.4M884.5 322.4V324.4M885.0 322.4V324.4M885.5 322.4V324.4M886.0 322.4V324.4M886.5 322.4V324.4M887.0 322.4V324.4M887.5 322.4V324.4M888.0 322.4V324.4M888.5 322.4V324.4M889.0 322.4V324.4M889.5 322.4V324.4M890.0 322.4V324.4M890.5 322.4V327.1M891.0 322.4V324.4M891.5 322.4V324.4M892.0 322.4V324.4M892.5 322.4V326.1M893.0 322.4V324.4M893.5 322.4V324.4M894.0 322.4V324.4M894.5 322.4V324.4M895.0 322.4V324.4M895.5 322.4V324.4M896.0 322.4V324.4M896.5 322.4V324.4M897.0 321.2V324.4M897.5 322.4V326.2M898.0 322.4V324.4M898.5 322.4V324.4M899.0 322.4V324.4M899.5 322.4V324.4M900.0 322.4V326.7M900.5 322.4V324.4M901.0 322.4V324.4M901.5 322.4V324.4M902.0 322.4V325.5M902.5 320.5V324.4M903.0 322.4V324.4M903.5 322.4V324.4M904.0 322.4V324.4M904.5 322.4V324.4M905.0 322.4V324.4M905.5 322.4V324.4M906.0 322.4V324.4M906.5 322.4V324.4M907.0 322.4V324.4M907.5 322.4V324.4M908.0 321.4V324.4M908.5 322.4V324.4M909.0 322.4V324.4M909.5 322.4V324.4M910.0 321.4V324.4M910.5 322.4V324.4M911.0 322.4V324.4M911.5 322.4V324.4M912.0 322.4V324.4M912.5 322.4V324.4M913.0 322.4V324.4M913.5 322.4V324.4M914.0 322.4V325.3M914.5 322.4V324.4M915.0 322.4V324.4M915.5 320.3V324.4M916.0 322.4V324.4M916.5 322.4V324.4M917.0 322.4V324.4M917.5 322.4V324.4M918.0 322.4V324.4M918.5 322.4V324.4M919.0 322.4V324.4M919.5 322.4V324.4M920.0 322.4V324.4M920.5 322.4V324.4M921.0 322.4V326.1M921.5 322.4V324.4M922.0 322.4V324.4M922.5 322.4V324.4M923.0 322.4V324.4M923.5 322.4V324.4M924.0 321.0V324.4M924.5 322.4V324.4M925.0 322.4V324.4M925.5 322.4V324.4M926.0 322.4V324.4M926.5 322.4V324.4M927.0 322.4V324.4M927.5 322.4V326.9M928.0 322.4V326.6M928.5 322.4V324.4M929.0 321.4V324.9M929.5 321.4V324.9M930.0 321.4V324.9M930.5 321.4V324.9M931.0 321.4V324.9M931.5 321.4V324.9M932.0 321.4V324.9M932.5 321.4V324.9M933.0 319.3V324.9" stroke="#e8e81c" stroke-width="1.3" fill="none"/>
<path d="M774.5 323.4h14.5M781.7 316.5v14" stroke="#f4f4f4" stroke-width="1.5" fill="none"/>
<rect x="0" y="623.6" width="383" height="96.4" fill="#58a8cc"/>
<rect x="0" y="623.6" width="2" height="96.4" fill="#2a94d8"/>
<rect x="1.6" y="640" width="248.6" height="14" fill="#1f6c94"/>
<rect x="1.6" y="623.3" width="248.6" height="23.5" rx="4.5" fill="#000"/>
<rect x="1.6" y="647.8" width="248.6" height="22.6" rx="4.5" fill="#000"/>
<rect x="253.8" y="623.3" width="126" height="47.1" rx="6" fill="#000"/>
<rect x="1.6" y="673" width="378.2" height="43.6" rx="6" fill="#000"/>
<rect x="379.8" y="623.6" width="3.4" height="96.4" fill="#46a0d4"/>
<rect x="250.4" y="624" width="3.2" height="47" fill="#4ea6dc"/>
<rect x="383.2" y="623.5" width="118.6" height="21.5" rx="10.7" fill="#000"/>
<rect x="796.6" y="624" width="155.6" height="20.8" rx="10.4" fill="#000"/>
<rect x="386.6" y="648.8" width="108.6" height="67.80000000000004" rx="3" fill="#043c8c"/><rect x="386.6" y="648.8" width="106.0" height="65.20000000000005" rx="3" fill="#44a6f8"/><rect x="388.40000000000003" y="650.8" width="104.2" height="63.200000000000045" rx="2" fill="#0381e2"/>
<rect x="716.8" y="649.4" width="107.40000000000006" height="67.20000000000002" rx="3" fill="#043c8c"/><rect x="716.8" y="649.4" width="104.80000000000007" height="64.60000000000002" rx="3" fill="#44a6f8"/><rect x="718.5999999999999" y="651.4" width="103.00000000000007" height="62.60000000000002" rx="2" fill="#0381e2"/>
<rect x="409" y="685.2" width="60" height="23.8" fill="#f0f0f0"/>
<circle cx="12.3" cy="636.6" r="9.0" fill="#f01010"/><text x="12.3" y="642.8" text-anchor="middle" font-family="Liberation Sans, sans-serif" font-size="17.5" fill="#000">1</text>
<circle cx="12.3" cy="660" r="9.5" fill="#e8e81c"/><text x="12.3" y="666.2" text-anchor="middle" font-family="Liberation Sans, sans-serif" font-size="17.5" fill="#000">2</text>
<circle cx="12.3" cy="683.4" r="9.5" fill="#e8e81c"/><text x="12.3" y="689.6" text-anchor="middle" font-family="Liberation Sans, sans-serif" font-size="17.5" fill="#000">2</text>
<circle cx="12.3" cy="706.8" r="9.5" fill="#e8e81c"/><text x="12.3" y="713.0" text-anchor="middle" font-family="Liberation Sans, sans-serif" font-size="17.5" fill="#000">2</text>
<circle cx="201.6" cy="684" r="9.5" fill="#e8e81c"/><text x="201.6" y="690.2" text-anchor="middle" font-family="Liberation Sans, sans-serif" font-size="17.5" fill="#000">2</text>
<circle cx="201.6" cy="706.8" r="9.5" fill="#e8e81c"/><text x="201.6" y="713.0" text-anchor="middle" font-family="Liberation Sans, sans-serif" font-size="17.5" fill="#000">2</text>
<circle cx="810.2" cy="634.2" r="9.5" fill="#e8e81c"/><text x="810.2" y="640.4" text-anchor="middle" font-family="Liberation Sans, sans-serif" font-size="17.5" fill="#000">2</text>
<path d="M822.6 641.8h8.2l6.2-14.8h8" stroke="#f0f0f0" stroke-width="1.5" fill="none"/>
<text x="28.6" y="18.2" fill="#042c70" font-family="Liberation Mono, monospace" font-size="17" letter-spacing="1.8" xml:space="preserve" stroke="#042c70" stroke-width="0.45">AKTAKOM</text>
<text x="167.6" y="17.3" fill="#800000" font-family="Liberation Mono, monospace" font-size="17" letter-spacing="1.8" xml:space="preserve" stroke="#800000" stroke-width="0.45">Stop</text>
<text x="694" y="19" fill="#e6e6e6" font-family="Liberation Mono, monospace" font-size="18" letter-spacing="1.2" xml:space="preserve" >2.400s</text>
<text x="831.6" y="18" fill="#f0f0f0" font-family="Liberation Mono, monospace" font-size="18" letter-spacing="1.2" xml:space="preserve" >6:49</text>
<text x="684.5" y="17" text-anchor="middle" font-family="Liberation Sans, sans-serif" font-weight="bold" font-size="12" fill="#d050ff">T</text>
 <text x="9.6" y="330.4" text-anchor="middle" font-family="Liberation Sans, sans-serif" font-size="18" fill="#e8e81c">2</text>
<text x="21.4" y="643.6" fill="#c01212" font-family="Liberation Mono, monospace" font-size="18" letter-spacing="1.2" xml:space="preserve" >50.0mV-</text>
<text x="126.4" y="643.4" fill="#c01212" font-family="Liberation Mono, monospace" font-size="18" letter-spacing="1.2" xml:space="preserve" >0.00div</text>
<text x="21.4" y="667.4" fill="#d0d022" font-family="Liberation Mono, monospace" font-size="18" letter-spacing="1.2" xml:space="preserve" >2V-</text>
<text x="126.4" y="667.2" fill="#d0d022" font-family="Liberation Mono, monospace" font-size="18" letter-spacing="1.2" xml:space="preserve" >0.00div</text>
<text x="25.4" y="689.8" fill="#d0d022" font-family="Liberation Mono, monospace" font-size="18" letter-spacing="1.2" xml:space="preserve" >F:  ?</text>
<text x="26.2" y="712.8" fill="#d0d022" font-family="Liberation Mono, monospace" font-size="18" letter-spacing="1.2" xml:space="preserve" >+D:0.8%</text>
<text x="217" y="690" fill="#d0d022" font-family="Liberation Mono, monospace" font-size="18" letter-spacing="1.2" xml:space="preserve" >Vk:759.8mv</text>
<text x="217" y="712.6" fill="#d0d022" font-family="Liberation Mono, monospace" font-size="18" letter-spacing="1.2" xml:space="preserve" >V:492.8mv</text>
<text x="269.4" y="641" fill="#dadada" font-family="Liberation Mono, monospace" font-size="18" letter-spacing="1.2" xml:space="preserve" >(500S/s)</text>
<text x="261.2" y="665.2" fill="#dadada" font-family="Liberation Mono, monospace" font-size="18" letter-spacing="1.2" xml:space="preserve" >Depth:10K</text>
<text x="405" y="641" fill="#dadada" font-family="Liberation Mono, monospace" font-size="18" letter-spacing="1.2" xml:space="preserve" >M:1.0s</text>
<text x="849.4" y="641" fill="#dadada" font-family="Liberation Mono, monospace" font-size="18" letter-spacing="1.2" xml:space="preserve" >0.00mV</text>
<text x="415.2" y="674.4" fill="#042c70" font-family="Liberation Mono, monospace" font-size="17" letter-spacing="1.8" xml:space="preserve" stroke="#042c70" stroke-width="0.45">Type</text>
<text x="410.2" y="702.6" fill="#101010" font-family="Liberation Mono, monospace" font-size="17" letter-spacing="1.8" xml:space="preserve" stroke="#101010" stroke-width="0.35">Image</text>
<text x="744.8" y="688.4" fill="#042c70" font-family="Liberation Mono, monospace" font-size="17" letter-spacing="1.8" xml:space="preserve" stroke="#042c70" stroke-width="0.45">Save</text>
</svg>
</body></html>
